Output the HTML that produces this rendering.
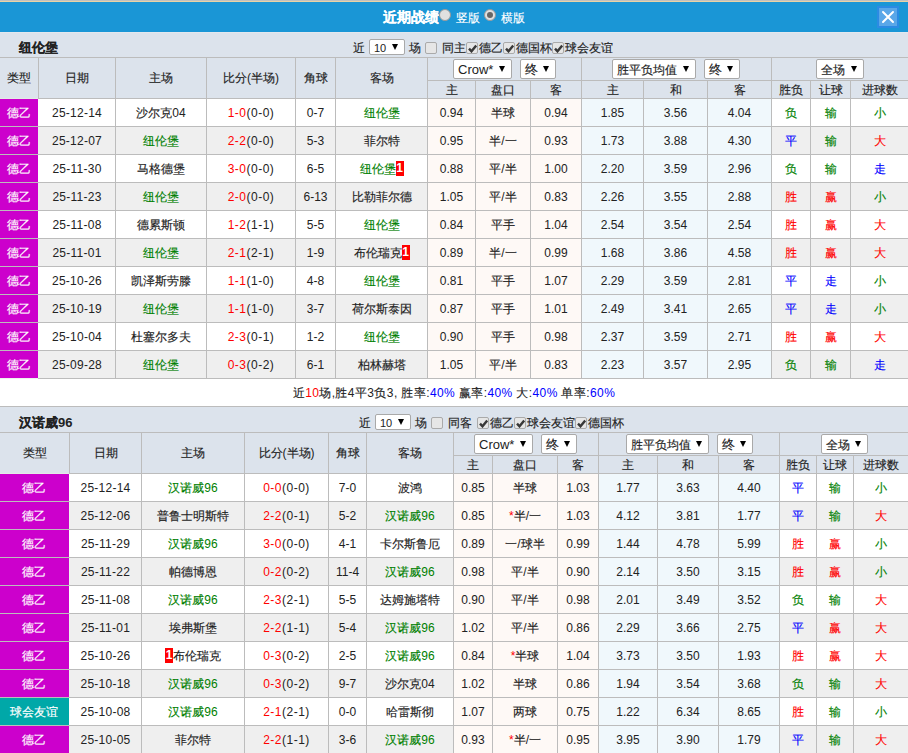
<!DOCTYPE html><html><head><meta charset="utf-8"><style>
html,body{margin:0;padding:0;}
body{width:908px;height:753px;overflow:hidden;position:relative;background:#fff;font-family:"Liberation Sans", sans-serif;font-size:12px;color:#222;}
.a{position:absolute;}
.c{-webkit-text-stroke:0.15px currentColor;}
.t{position:absolute;white-space:nowrap;}
.rc{display:inline-block;position:relative;top:-1px;background:#f00;color:#fff;font-weight:bold;width:8px;height:15px;line-height:15px;text-align:center;vertical-align:middle;font-size:12px;}
.sel{position:absolute;background:#fff;border:1px solid #a9a9a9;border-radius:2px;color:#222;white-space:nowrap;}
.tri{position:absolute;right:6px;top:50%;margin-top:-3px;width:0;height:0;border-left:3.5px solid transparent;border-right:3.5px solid transparent;border-top:6px solid #000;}
.cb{position:absolute;width:10px;height:10px;border:1px solid #aaa;border-radius:2px;background:#e6e6e6;}
.radio{position:absolute;width:10px;height:10px;border:1px solid #999;border-radius:50%;background:#e0e0e0;}
.radio .dot{position:absolute;left:2px;top:2px;width:6px;height:6px;border-radius:50%;background:#666;}
</style></head><body>
<div class="a" style="left:0px;top:0px;width:908px;height:1px;background:#c0c0c0;"></div>
<div class="a" style="left:0px;top:1px;width:908px;height:1px;background:#e9d3a6;"></div>
<div class="a" style="left:0px;top:2px;width:908px;height:30px;background:#1a96d6;"></div>
<div class="t" style="left:383px;top:9px;height:16px;line-height:16px;color:#fff;font-size:14px;font-weight:bold;"><span class="c">近期战绩</span></div>
<div class="radio" style="left:439px;top:9px"></div>
<div class="t" style="left:456px;top:9.5px;height:16px;line-height:16px;color:#fff;font-size:12px;"><span class="c">竖版</span></div>
<div class="radio" style="left:484px;top:9px"><div class="dot"></div></div>
<div class="t" style="left:501px;top:9.5px;height:16px;line-height:16px;color:#fff;font-size:12px;"><span class="c">横版</span></div>
<div class="a" style="left:877px;top:6px;width:18px;height:18px;border:2px solid #2b8be3;background:#5aa7e8"></div>
<svg class="a" style="left:877px;top:6px" width="22" height="22" viewBox="0 0 22 22"><path d="M6 6 L16 16 M16 6 L6 16" stroke="#fff" stroke-width="2" stroke-linecap="round"/></svg>
<div class="a" style="left:0px;top:32px;width:908px;height:25px;background:#dce3ec;"></div>
<div class="a" style="left:0px;top:32px;width:908px;height:1px;background:#e3e8ee;"></div>
<div class="t" style="left:19px;top:39.5px;width:281px;height:16px;line-height:16px;text-align:left;color:#222;font-size:13px;font-weight:bold;"><span class="c">纽伦堡</span></div>
<div class="a" style="left:0px;top:57px;width:908px;height:1px;background:#bcbcbc;"></div>
<div class="a" style="left:0px;top:58px;width:908px;height:40px;background:#dce3ec;"></div>
<div class="a" style="left:0px;top:98px;width:908px;height:1px;background:#bcbcbc;"></div>
<div class="a" style="left:427px;top:80px;width:481px;height:1px;background:#bcbcbc;"></div>
<div class="a" style="left:38px;top:57px;width:1px;height:41px;background:#bcbcbc;"></div>
<div class="a" style="left:115px;top:57px;width:1px;height:41px;background:#bcbcbc;"></div>
<div class="a" style="left:206px;top:57px;width:1px;height:41px;background:#bcbcbc;"></div>
<div class="a" style="left:295px;top:57px;width:1px;height:41px;background:#bcbcbc;"></div>
<div class="a" style="left:335px;top:57px;width:1px;height:41px;background:#bcbcbc;"></div>
<div class="a" style="left:427px;top:57px;width:1px;height:41px;background:#bcbcbc;"></div>
<div class="a" style="left:475px;top:80px;width:1px;height:18px;background:#bcbcbc;"></div>
<div class="a" style="left:530px;top:80px;width:1px;height:18px;background:#bcbcbc;"></div>
<div class="a" style="left:581px;top:57px;width:1px;height:41px;background:#bcbcbc;"></div>
<div class="a" style="left:643px;top:80px;width:1px;height:18px;background:#bcbcbc;"></div>
<div class="a" style="left:707px;top:80px;width:1px;height:18px;background:#bcbcbc;"></div>
<div class="a" style="left:771px;top:57px;width:1px;height:41px;background:#bcbcbc;"></div>
<div class="a" style="left:810px;top:80px;width:1px;height:18px;background:#bcbcbc;"></div>
<div class="a" style="left:850px;top:80px;width:1px;height:18px;background:#bcbcbc;"></div>
<div class="t" style="left:0px;top:70.0px;width:38px;height:16px;line-height:16px;text-align:center;color:#222;font-size:12px;"><span class="c">类型</span></div>
<div class="t" style="left:39px;top:70.0px;width:76px;height:16px;line-height:16px;text-align:center;color:#222;font-size:12px;"><span class="c">日期</span></div>
<div class="t" style="left:116px;top:70.0px;width:90px;height:16px;line-height:16px;text-align:center;color:#222;font-size:12px;"><span class="c">主场</span></div>
<div class="t" style="left:207px;top:70.0px;width:88px;height:16px;line-height:16px;text-align:center;color:#222;font-size:12px;"><span class="c">比分</span>(<span class="c">半场</span>)</div>
<div class="t" style="left:296px;top:70.0px;width:39px;height:16px;line-height:16px;text-align:center;color:#222;font-size:12px;"><span class="c">角球</span></div>
<div class="t" style="left:336px;top:70.0px;width:91px;height:16px;line-height:16px;text-align:center;color:#222;font-size:12px;"><span class="c">客场</span></div>
<div class="t" style="left:428px;top:81.5px;width:47px;height:16px;line-height:16px;text-align:center;color:#222;font-size:12px;"><span class="c">主</span></div>
<div class="t" style="left:476px;top:81.5px;width:54px;height:16px;line-height:16px;text-align:center;color:#222;font-size:12px;"><span class="c">盘口</span></div>
<div class="t" style="left:531px;top:81.5px;width:50px;height:16px;line-height:16px;text-align:center;color:#222;font-size:12px;"><span class="c">客</span></div>
<div class="t" style="left:582px;top:81.5px;width:61px;height:16px;line-height:16px;text-align:center;color:#222;font-size:12px;"><span class="c">主</span></div>
<div class="t" style="left:644px;top:81.5px;width:63px;height:16px;line-height:16px;text-align:center;color:#222;font-size:12px;"><span class="c">和</span></div>
<div class="t" style="left:708px;top:81.5px;width:63px;height:16px;line-height:16px;text-align:center;color:#222;font-size:12px;"><span class="c">客</span></div>
<div class="t" style="left:772px;top:81.5px;width:38px;height:16px;line-height:16px;text-align:center;color:#222;font-size:12px;"><span class="c">胜负</span></div>
<div class="t" style="left:811px;top:81.5px;width:39px;height:16px;line-height:16px;text-align:center;color:#222;font-size:12px;"><span class="c">让球</span></div>
<div class="t" style="left:851px;top:81.5px;width:57px;height:16px;line-height:16px;text-align:center;color:#222;font-size:12px;"><span class="c">进球数</span></div>
<div class="t" style="left:353px;top:40px;height:16px;line-height:16px;color:#222;font-size:12px;"><span class="c">近</span></div>
<div class="sel" style="left:369px;top:39px;width:34px;height:14px;line-height:14px;font-size:12px"><span style="position:absolute;left:4px;top:1px;font-size:11px">10</span><span class="tri"></span></div>
<div class="t" style="left:409px;top:40px;height:16px;line-height:16px;color:#222;font-size:12px;"><span class="c">场</span></div>
<div class="cb" style="left:425px;top:42px"></div>
<div class="t" style="left:442px;top:40px;height:16px;line-height:16px;color:#222;font-size:12px;"><span class="c">同主</span></div>
<div class="cb" style="left:466px;top:42px"><svg width="9" height="9" viewBox="0 0 9 9" style="position:absolute;left:1px;top:1px"><path d="M1 4.6 L3.5 7.3 L8.2 1.6" fill="none" stroke="#383838" stroke-width="2.4"/></svg></div>
<div class="t" style="left:479px;top:40px;height:16px;line-height:16px;color:#222;font-size:12px;"><span class="c">德乙</span></div>
<div class="cb" style="left:503px;top:42px"><svg width="9" height="9" viewBox="0 0 9 9" style="position:absolute;left:1px;top:1px"><path d="M1 4.6 L3.5 7.3 L8.2 1.6" fill="none" stroke="#383838" stroke-width="2.4"/></svg></div>
<div class="t" style="left:516px;top:40px;height:16px;line-height:16px;color:#222;font-size:12px;"><span class="c">德国杯</span></div>
<div class="cb" style="left:552px;top:42px"><svg width="9" height="9" viewBox="0 0 9 9" style="position:absolute;left:1px;top:1px"><path d="M1 4.6 L3.5 7.3 L8.2 1.6" fill="none" stroke="#383838" stroke-width="2.4"/></svg></div>
<div class="t" style="left:565px;top:40px;height:16px;line-height:16px;color:#222;font-size:12px;"><span class="c">球会友谊</span></div>
<div class="sel" style="left:453px;top:59px;width:57px;height:18px;line-height:18px;font-size:13px"><span style="position:absolute;left:4px;top:1px">Crow*</span><span class="tri"></span></div>
<div class="sel" style="left:520px;top:59px;width:34px;height:18px;line-height:18px;font-size:13px"><span style="position:absolute;left:4px;top:1px;font-size:13px"><span class="c">终</span></span><span class="tri"></span></div>
<div class="sel" style="left:612px;top:59px;width:82px;height:18px;line-height:18px;font-size:13px"><span style="position:absolute;left:4px;top:1px;font-size:12px"><span class="c">胜平负均值</span></span><span class="tri"></span></div>
<div class="sel" style="left:704px;top:59px;width:34px;height:18px;line-height:18px;font-size:13px"><span style="position:absolute;left:4px;top:1px;font-size:13px"><span class="c">终</span></span><span class="tri"></span></div>
<div class="sel" style="left:816px;top:59px;width:46px;height:18px;line-height:18px;font-size:13px"><span style="position:absolute;left:4px;top:1px;font-size:12px"><span class="c">全场</span></span><span class="tri"></span></div>
<div class="a" style="left:0px;top:99px;width:908px;height:27px;background:#ffffff;"></div>
<div class="a" style="left:428px;top:99px;width:153px;height:27px;background:#fef9f6;"></div>
<div class="a" style="left:582px;top:99px;width:189px;height:27px;background:#f0f8fc;"></div>
<div class="a" style="left:0px;top:99px;width:38px;height:27px;background:#cc00cc;"></div>
<div class="a" style="left:0px;top:98px;width:38px;height:1px;background:#e4ebe6;"></div>
<div class="a" style="left:38px;top:126px;width:870px;height:1px;background:#bcbcbc;"></div>
<div class="a" style="left:0px;top:126px;width:38px;height:1px;background:#bcbcbc;"></div>
<div class="a" style="left:115px;top:99px;width:1px;height:27px;background:#bcbcbc;"></div>
<div class="a" style="left:206px;top:99px;width:1px;height:27px;background:#bcbcbc;"></div>
<div class="a" style="left:295px;top:99px;width:1px;height:27px;background:#bcbcbc;"></div>
<div class="a" style="left:335px;top:99px;width:1px;height:27px;background:#bcbcbc;"></div>
<div class="a" style="left:427px;top:99px;width:1px;height:27px;background:#bcbcbc;"></div>
<div class="a" style="left:475px;top:99px;width:1px;height:27px;background:#bcbcbc;"></div>
<div class="a" style="left:530px;top:99px;width:1px;height:27px;background:#bcbcbc;"></div>
<div class="a" style="left:581px;top:99px;width:1px;height:27px;background:#bcbcbc;"></div>
<div class="a" style="left:643px;top:99px;width:1px;height:27px;background:#bcbcbc;"></div>
<div class="a" style="left:707px;top:99px;width:1px;height:27px;background:#bcbcbc;"></div>
<div class="a" style="left:771px;top:99px;width:1px;height:27px;background:#bcbcbc;"></div>
<div class="a" style="left:810px;top:99px;width:1px;height:27px;background:#bcbcbc;"></div>
<div class="a" style="left:850px;top:99px;width:1px;height:27px;background:#bcbcbc;"></div>
<div class="t" style="left:0px;top:104.5px;width:38px;height:16px;line-height:16px;text-align:center;color:#fff;font-size:12px;"><span class="c">德乙</span></div>
<div class="t" style="left:39px;top:104.5px;width:76px;height:16px;line-height:16px;text-align:center;color:#222;font-size:12px;letter-spacing:0.25px;">25-12-14</div>
<div class="t" style="left:116px;top:104.5px;width:90px;height:16px;line-height:16px;text-align:center;color:#222;font-size:12px;"><span class="c">沙尔克</span>04</div>
<div class="t" style="left:207px;top:104.5px;width:88px;height:16px;line-height:16px;text-align:center;color:#222;font-size:12px;letter-spacing:0.5px;"><span style="color:#ff0000">1-0</span>(0-0)</div>
<div class="t" style="left:296px;top:104.5px;width:39px;height:16px;line-height:16px;text-align:center;color:#222;font-size:12px;">0-7</div>
<div class="t" style="left:336px;top:104.5px;width:91px;height:16px;line-height:16px;text-align:center;color:#008000;font-size:12px;"><span class="c">纽伦堡</span></div>
<div class="t" style="left:428px;top:104.5px;width:47px;height:16px;line-height:16px;text-align:center;color:#222;font-size:12px;">0.94</div>
<div class="t" style="left:476px;top:104.5px;width:54px;height:16px;line-height:16px;text-align:center;color:#222;font-size:12px;"><span class="c">半球</span></div>
<div class="t" style="left:531px;top:104.5px;width:50px;height:16px;line-height:16px;text-align:center;color:#222;font-size:12px;">0.94</div>
<div class="t" style="left:582px;top:104.5px;width:61px;height:16px;line-height:16px;text-align:center;color:#222;font-size:12px;">1.85</div>
<div class="t" style="left:644px;top:104.5px;width:63px;height:16px;line-height:16px;text-align:center;color:#222;font-size:12px;">3.56</div>
<div class="t" style="left:708px;top:104.5px;width:63px;height:16px;line-height:16px;text-align:center;color:#222;font-size:12px;">4.04</div>
<div class="t" style="left:772px;top:104.5px;width:38px;height:16px;line-height:16px;text-align:center;color:#008000;font-size:12px;"><span class="c">负</span></div>
<div class="t" style="left:811px;top:104.5px;width:39px;height:16px;line-height:16px;text-align:center;color:#008000;font-size:12px;"><span class="c">输</span></div>
<div class="t" style="left:851px;top:104.5px;width:57px;height:16px;line-height:16px;text-align:center;color:#008000;font-size:12px;"><span class="c">小</span></div>
<div class="a" style="left:0px;top:127px;width:908px;height:27px;background:#efefef;"></div>
<div class="a" style="left:428px;top:127px;width:153px;height:27px;background:#fef9f6;"></div>
<div class="a" style="left:582px;top:127px;width:189px;height:27px;background:#f0f8fc;"></div>
<div class="a" style="left:0px;top:127px;width:38px;height:27px;background:#cc00cc;"></div>
<div class="a" style="left:38px;top:154px;width:870px;height:1px;background:#bcbcbc;"></div>
<div class="a" style="left:0px;top:154px;width:38px;height:1px;background:#bcbcbc;"></div>
<div class="a" style="left:115px;top:127px;width:1px;height:27px;background:#bcbcbc;"></div>
<div class="a" style="left:206px;top:127px;width:1px;height:27px;background:#bcbcbc;"></div>
<div class="a" style="left:295px;top:127px;width:1px;height:27px;background:#bcbcbc;"></div>
<div class="a" style="left:335px;top:127px;width:1px;height:27px;background:#bcbcbc;"></div>
<div class="a" style="left:427px;top:127px;width:1px;height:27px;background:#bcbcbc;"></div>
<div class="a" style="left:475px;top:127px;width:1px;height:27px;background:#bcbcbc;"></div>
<div class="a" style="left:530px;top:127px;width:1px;height:27px;background:#bcbcbc;"></div>
<div class="a" style="left:581px;top:127px;width:1px;height:27px;background:#bcbcbc;"></div>
<div class="a" style="left:643px;top:127px;width:1px;height:27px;background:#bcbcbc;"></div>
<div class="a" style="left:707px;top:127px;width:1px;height:27px;background:#bcbcbc;"></div>
<div class="a" style="left:771px;top:127px;width:1px;height:27px;background:#bcbcbc;"></div>
<div class="a" style="left:810px;top:127px;width:1px;height:27px;background:#bcbcbc;"></div>
<div class="a" style="left:850px;top:127px;width:1px;height:27px;background:#bcbcbc;"></div>
<div class="t" style="left:0px;top:132.5px;width:38px;height:16px;line-height:16px;text-align:center;color:#fff;font-size:12px;"><span class="c">德乙</span></div>
<div class="t" style="left:39px;top:132.5px;width:76px;height:16px;line-height:16px;text-align:center;color:#222;font-size:12px;letter-spacing:0.25px;">25-12-07</div>
<div class="t" style="left:116px;top:132.5px;width:90px;height:16px;line-height:16px;text-align:center;color:#008000;font-size:12px;"><span class="c">纽伦堡</span></div>
<div class="t" style="left:207px;top:132.5px;width:88px;height:16px;line-height:16px;text-align:center;color:#222;font-size:12px;letter-spacing:0.5px;"><span style="color:#ff0000">2-2</span>(0-0)</div>
<div class="t" style="left:296px;top:132.5px;width:39px;height:16px;line-height:16px;text-align:center;color:#222;font-size:12px;">5-3</div>
<div class="t" style="left:336px;top:132.5px;width:91px;height:16px;line-height:16px;text-align:center;color:#222;font-size:12px;"><span class="c">菲尔特</span></div>
<div class="t" style="left:428px;top:132.5px;width:47px;height:16px;line-height:16px;text-align:center;color:#222;font-size:12px;">0.95</div>
<div class="t" style="left:476px;top:132.5px;width:54px;height:16px;line-height:16px;text-align:center;color:#222;font-size:12px;"><span class="c">半</span>/<span class="c">一</span></div>
<div class="t" style="left:531px;top:132.5px;width:50px;height:16px;line-height:16px;text-align:center;color:#222;font-size:12px;">0.93</div>
<div class="t" style="left:582px;top:132.5px;width:61px;height:16px;line-height:16px;text-align:center;color:#222;font-size:12px;">1.73</div>
<div class="t" style="left:644px;top:132.5px;width:63px;height:16px;line-height:16px;text-align:center;color:#222;font-size:12px;">3.88</div>
<div class="t" style="left:708px;top:132.5px;width:63px;height:16px;line-height:16px;text-align:center;color:#222;font-size:12px;">4.30</div>
<div class="t" style="left:772px;top:132.5px;width:38px;height:16px;line-height:16px;text-align:center;color:#0000ff;font-size:12px;"><span class="c">平</span></div>
<div class="t" style="left:811px;top:132.5px;width:39px;height:16px;line-height:16px;text-align:center;color:#008000;font-size:12px;"><span class="c">输</span></div>
<div class="t" style="left:851px;top:132.5px;width:57px;height:16px;line-height:16px;text-align:center;color:#ff0000;font-size:12px;"><span class="c">大</span></div>
<div class="a" style="left:0px;top:155px;width:908px;height:27px;background:#ffffff;"></div>
<div class="a" style="left:428px;top:155px;width:153px;height:27px;background:#fef9f6;"></div>
<div class="a" style="left:582px;top:155px;width:189px;height:27px;background:#f0f8fc;"></div>
<div class="a" style="left:0px;top:155px;width:38px;height:27px;background:#cc00cc;"></div>
<div class="a" style="left:38px;top:182px;width:870px;height:1px;background:#bcbcbc;"></div>
<div class="a" style="left:0px;top:182px;width:38px;height:1px;background:#bcbcbc;"></div>
<div class="a" style="left:115px;top:155px;width:1px;height:27px;background:#bcbcbc;"></div>
<div class="a" style="left:206px;top:155px;width:1px;height:27px;background:#bcbcbc;"></div>
<div class="a" style="left:295px;top:155px;width:1px;height:27px;background:#bcbcbc;"></div>
<div class="a" style="left:335px;top:155px;width:1px;height:27px;background:#bcbcbc;"></div>
<div class="a" style="left:427px;top:155px;width:1px;height:27px;background:#bcbcbc;"></div>
<div class="a" style="left:475px;top:155px;width:1px;height:27px;background:#bcbcbc;"></div>
<div class="a" style="left:530px;top:155px;width:1px;height:27px;background:#bcbcbc;"></div>
<div class="a" style="left:581px;top:155px;width:1px;height:27px;background:#bcbcbc;"></div>
<div class="a" style="left:643px;top:155px;width:1px;height:27px;background:#bcbcbc;"></div>
<div class="a" style="left:707px;top:155px;width:1px;height:27px;background:#bcbcbc;"></div>
<div class="a" style="left:771px;top:155px;width:1px;height:27px;background:#bcbcbc;"></div>
<div class="a" style="left:810px;top:155px;width:1px;height:27px;background:#bcbcbc;"></div>
<div class="a" style="left:850px;top:155px;width:1px;height:27px;background:#bcbcbc;"></div>
<div class="t" style="left:0px;top:160.5px;width:38px;height:16px;line-height:16px;text-align:center;color:#fff;font-size:12px;"><span class="c">德乙</span></div>
<div class="t" style="left:39px;top:160.5px;width:76px;height:16px;line-height:16px;text-align:center;color:#222;font-size:12px;letter-spacing:0.25px;">25-11-30</div>
<div class="t" style="left:116px;top:160.5px;width:90px;height:16px;line-height:16px;text-align:center;color:#222;font-size:12px;"><span class="c">马格德堡</span></div>
<div class="t" style="left:207px;top:160.5px;width:88px;height:16px;line-height:16px;text-align:center;color:#222;font-size:12px;letter-spacing:0.5px;"><span style="color:#ff0000">3-0</span>(0-0)</div>
<div class="t" style="left:296px;top:160.5px;width:39px;height:16px;line-height:16px;text-align:center;color:#222;font-size:12px;">6-5</div>
<div class="t" style="left:336px;top:160.5px;width:91px;height:16px;line-height:16px;text-align:center;color:#008000;font-size:12px;"><span class="c">纽伦堡</span><span class="rc">1</span></div>
<div class="t" style="left:428px;top:160.5px;width:47px;height:16px;line-height:16px;text-align:center;color:#222;font-size:12px;">0.88</div>
<div class="t" style="left:476px;top:160.5px;width:54px;height:16px;line-height:16px;text-align:center;color:#222;font-size:12px;"><span class="c">平</span>/<span class="c">半</span></div>
<div class="t" style="left:531px;top:160.5px;width:50px;height:16px;line-height:16px;text-align:center;color:#222;font-size:12px;">1.00</div>
<div class="t" style="left:582px;top:160.5px;width:61px;height:16px;line-height:16px;text-align:center;color:#222;font-size:12px;">2.20</div>
<div class="t" style="left:644px;top:160.5px;width:63px;height:16px;line-height:16px;text-align:center;color:#222;font-size:12px;">3.59</div>
<div class="t" style="left:708px;top:160.5px;width:63px;height:16px;line-height:16px;text-align:center;color:#222;font-size:12px;">2.96</div>
<div class="t" style="left:772px;top:160.5px;width:38px;height:16px;line-height:16px;text-align:center;color:#008000;font-size:12px;"><span class="c">负</span></div>
<div class="t" style="left:811px;top:160.5px;width:39px;height:16px;line-height:16px;text-align:center;color:#008000;font-size:12px;"><span class="c">输</span></div>
<div class="t" style="left:851px;top:160.5px;width:57px;height:16px;line-height:16px;text-align:center;color:#0000ff;font-size:12px;"><span class="c">走</span></div>
<div class="a" style="left:0px;top:183px;width:908px;height:27px;background:#efefef;"></div>
<div class="a" style="left:428px;top:183px;width:153px;height:27px;background:#fef9f6;"></div>
<div class="a" style="left:582px;top:183px;width:189px;height:27px;background:#f0f8fc;"></div>
<div class="a" style="left:0px;top:183px;width:38px;height:27px;background:#cc00cc;"></div>
<div class="a" style="left:38px;top:210px;width:870px;height:1px;background:#bcbcbc;"></div>
<div class="a" style="left:0px;top:210px;width:38px;height:1px;background:#bcbcbc;"></div>
<div class="a" style="left:115px;top:183px;width:1px;height:27px;background:#bcbcbc;"></div>
<div class="a" style="left:206px;top:183px;width:1px;height:27px;background:#bcbcbc;"></div>
<div class="a" style="left:295px;top:183px;width:1px;height:27px;background:#bcbcbc;"></div>
<div class="a" style="left:335px;top:183px;width:1px;height:27px;background:#bcbcbc;"></div>
<div class="a" style="left:427px;top:183px;width:1px;height:27px;background:#bcbcbc;"></div>
<div class="a" style="left:475px;top:183px;width:1px;height:27px;background:#bcbcbc;"></div>
<div class="a" style="left:530px;top:183px;width:1px;height:27px;background:#bcbcbc;"></div>
<div class="a" style="left:581px;top:183px;width:1px;height:27px;background:#bcbcbc;"></div>
<div class="a" style="left:643px;top:183px;width:1px;height:27px;background:#bcbcbc;"></div>
<div class="a" style="left:707px;top:183px;width:1px;height:27px;background:#bcbcbc;"></div>
<div class="a" style="left:771px;top:183px;width:1px;height:27px;background:#bcbcbc;"></div>
<div class="a" style="left:810px;top:183px;width:1px;height:27px;background:#bcbcbc;"></div>
<div class="a" style="left:850px;top:183px;width:1px;height:27px;background:#bcbcbc;"></div>
<div class="t" style="left:0px;top:188.5px;width:38px;height:16px;line-height:16px;text-align:center;color:#fff;font-size:12px;"><span class="c">德乙</span></div>
<div class="t" style="left:39px;top:188.5px;width:76px;height:16px;line-height:16px;text-align:center;color:#222;font-size:12px;letter-spacing:0.25px;">25-11-23</div>
<div class="t" style="left:116px;top:188.5px;width:90px;height:16px;line-height:16px;text-align:center;color:#008000;font-size:12px;"><span class="c">纽伦堡</span></div>
<div class="t" style="left:207px;top:188.5px;width:88px;height:16px;line-height:16px;text-align:center;color:#222;font-size:12px;letter-spacing:0.5px;"><span style="color:#ff0000">2-0</span>(0-0)</div>
<div class="t" style="left:296px;top:188.5px;width:39px;height:16px;line-height:16px;text-align:center;color:#222;font-size:12px;">6-13</div>
<div class="t" style="left:336px;top:188.5px;width:91px;height:16px;line-height:16px;text-align:center;color:#222;font-size:12px;"><span class="c">比勒菲尔德</span></div>
<div class="t" style="left:428px;top:188.5px;width:47px;height:16px;line-height:16px;text-align:center;color:#222;font-size:12px;">1.05</div>
<div class="t" style="left:476px;top:188.5px;width:54px;height:16px;line-height:16px;text-align:center;color:#222;font-size:12px;"><span class="c">平</span>/<span class="c">半</span></div>
<div class="t" style="left:531px;top:188.5px;width:50px;height:16px;line-height:16px;text-align:center;color:#222;font-size:12px;">0.83</div>
<div class="t" style="left:582px;top:188.5px;width:61px;height:16px;line-height:16px;text-align:center;color:#222;font-size:12px;">2.26</div>
<div class="t" style="left:644px;top:188.5px;width:63px;height:16px;line-height:16px;text-align:center;color:#222;font-size:12px;">3.55</div>
<div class="t" style="left:708px;top:188.5px;width:63px;height:16px;line-height:16px;text-align:center;color:#222;font-size:12px;">2.88</div>
<div class="t" style="left:772px;top:188.5px;width:38px;height:16px;line-height:16px;text-align:center;color:#ff0000;font-size:12px;"><span class="c">胜</span></div>
<div class="t" style="left:811px;top:188.5px;width:39px;height:16px;line-height:16px;text-align:center;color:#ff0000;font-size:12px;"><span class="c">赢</span></div>
<div class="t" style="left:851px;top:188.5px;width:57px;height:16px;line-height:16px;text-align:center;color:#008000;font-size:12px;"><span class="c">小</span></div>
<div class="a" style="left:0px;top:211px;width:908px;height:27px;background:#ffffff;"></div>
<div class="a" style="left:428px;top:211px;width:153px;height:27px;background:#fef9f6;"></div>
<div class="a" style="left:582px;top:211px;width:189px;height:27px;background:#f0f8fc;"></div>
<div class="a" style="left:0px;top:211px;width:38px;height:27px;background:#cc00cc;"></div>
<div class="a" style="left:38px;top:238px;width:870px;height:1px;background:#bcbcbc;"></div>
<div class="a" style="left:0px;top:238px;width:38px;height:1px;background:#bcbcbc;"></div>
<div class="a" style="left:115px;top:211px;width:1px;height:27px;background:#bcbcbc;"></div>
<div class="a" style="left:206px;top:211px;width:1px;height:27px;background:#bcbcbc;"></div>
<div class="a" style="left:295px;top:211px;width:1px;height:27px;background:#bcbcbc;"></div>
<div class="a" style="left:335px;top:211px;width:1px;height:27px;background:#bcbcbc;"></div>
<div class="a" style="left:427px;top:211px;width:1px;height:27px;background:#bcbcbc;"></div>
<div class="a" style="left:475px;top:211px;width:1px;height:27px;background:#bcbcbc;"></div>
<div class="a" style="left:530px;top:211px;width:1px;height:27px;background:#bcbcbc;"></div>
<div class="a" style="left:581px;top:211px;width:1px;height:27px;background:#bcbcbc;"></div>
<div class="a" style="left:643px;top:211px;width:1px;height:27px;background:#bcbcbc;"></div>
<div class="a" style="left:707px;top:211px;width:1px;height:27px;background:#bcbcbc;"></div>
<div class="a" style="left:771px;top:211px;width:1px;height:27px;background:#bcbcbc;"></div>
<div class="a" style="left:810px;top:211px;width:1px;height:27px;background:#bcbcbc;"></div>
<div class="a" style="left:850px;top:211px;width:1px;height:27px;background:#bcbcbc;"></div>
<div class="t" style="left:0px;top:216.5px;width:38px;height:16px;line-height:16px;text-align:center;color:#fff;font-size:12px;"><span class="c">德乙</span></div>
<div class="t" style="left:39px;top:216.5px;width:76px;height:16px;line-height:16px;text-align:center;color:#222;font-size:12px;letter-spacing:0.25px;">25-11-08</div>
<div class="t" style="left:116px;top:216.5px;width:90px;height:16px;line-height:16px;text-align:center;color:#222;font-size:12px;"><span class="c">德累斯顿</span></div>
<div class="t" style="left:207px;top:216.5px;width:88px;height:16px;line-height:16px;text-align:center;color:#222;font-size:12px;letter-spacing:0.5px;"><span style="color:#ff0000">1-2</span>(1-1)</div>
<div class="t" style="left:296px;top:216.5px;width:39px;height:16px;line-height:16px;text-align:center;color:#222;font-size:12px;">5-5</div>
<div class="t" style="left:336px;top:216.5px;width:91px;height:16px;line-height:16px;text-align:center;color:#008000;font-size:12px;"><span class="c">纽伦堡</span></div>
<div class="t" style="left:428px;top:216.5px;width:47px;height:16px;line-height:16px;text-align:center;color:#222;font-size:12px;">0.84</div>
<div class="t" style="left:476px;top:216.5px;width:54px;height:16px;line-height:16px;text-align:center;color:#222;font-size:12px;"><span class="c">平手</span></div>
<div class="t" style="left:531px;top:216.5px;width:50px;height:16px;line-height:16px;text-align:center;color:#222;font-size:12px;">1.04</div>
<div class="t" style="left:582px;top:216.5px;width:61px;height:16px;line-height:16px;text-align:center;color:#222;font-size:12px;">2.54</div>
<div class="t" style="left:644px;top:216.5px;width:63px;height:16px;line-height:16px;text-align:center;color:#222;font-size:12px;">3.54</div>
<div class="t" style="left:708px;top:216.5px;width:63px;height:16px;line-height:16px;text-align:center;color:#222;font-size:12px;">2.54</div>
<div class="t" style="left:772px;top:216.5px;width:38px;height:16px;line-height:16px;text-align:center;color:#ff0000;font-size:12px;"><span class="c">胜</span></div>
<div class="t" style="left:811px;top:216.5px;width:39px;height:16px;line-height:16px;text-align:center;color:#ff0000;font-size:12px;"><span class="c">赢</span></div>
<div class="t" style="left:851px;top:216.5px;width:57px;height:16px;line-height:16px;text-align:center;color:#ff0000;font-size:12px;"><span class="c">大</span></div>
<div class="a" style="left:0px;top:239px;width:908px;height:27px;background:#efefef;"></div>
<div class="a" style="left:428px;top:239px;width:153px;height:27px;background:#fef9f6;"></div>
<div class="a" style="left:582px;top:239px;width:189px;height:27px;background:#f0f8fc;"></div>
<div class="a" style="left:0px;top:239px;width:38px;height:27px;background:#cc00cc;"></div>
<div class="a" style="left:38px;top:266px;width:870px;height:1px;background:#bcbcbc;"></div>
<div class="a" style="left:0px;top:266px;width:38px;height:1px;background:#bcbcbc;"></div>
<div class="a" style="left:115px;top:239px;width:1px;height:27px;background:#bcbcbc;"></div>
<div class="a" style="left:206px;top:239px;width:1px;height:27px;background:#bcbcbc;"></div>
<div class="a" style="left:295px;top:239px;width:1px;height:27px;background:#bcbcbc;"></div>
<div class="a" style="left:335px;top:239px;width:1px;height:27px;background:#bcbcbc;"></div>
<div class="a" style="left:427px;top:239px;width:1px;height:27px;background:#bcbcbc;"></div>
<div class="a" style="left:475px;top:239px;width:1px;height:27px;background:#bcbcbc;"></div>
<div class="a" style="left:530px;top:239px;width:1px;height:27px;background:#bcbcbc;"></div>
<div class="a" style="left:581px;top:239px;width:1px;height:27px;background:#bcbcbc;"></div>
<div class="a" style="left:643px;top:239px;width:1px;height:27px;background:#bcbcbc;"></div>
<div class="a" style="left:707px;top:239px;width:1px;height:27px;background:#bcbcbc;"></div>
<div class="a" style="left:771px;top:239px;width:1px;height:27px;background:#bcbcbc;"></div>
<div class="a" style="left:810px;top:239px;width:1px;height:27px;background:#bcbcbc;"></div>
<div class="a" style="left:850px;top:239px;width:1px;height:27px;background:#bcbcbc;"></div>
<div class="t" style="left:0px;top:244.5px;width:38px;height:16px;line-height:16px;text-align:center;color:#fff;font-size:12px;"><span class="c">德乙</span></div>
<div class="t" style="left:39px;top:244.5px;width:76px;height:16px;line-height:16px;text-align:center;color:#222;font-size:12px;letter-spacing:0.25px;">25-11-01</div>
<div class="t" style="left:116px;top:244.5px;width:90px;height:16px;line-height:16px;text-align:center;color:#008000;font-size:12px;"><span class="c">纽伦堡</span></div>
<div class="t" style="left:207px;top:244.5px;width:88px;height:16px;line-height:16px;text-align:center;color:#222;font-size:12px;letter-spacing:0.5px;"><span style="color:#ff0000">2-1</span>(2-1)</div>
<div class="t" style="left:296px;top:244.5px;width:39px;height:16px;line-height:16px;text-align:center;color:#222;font-size:12px;">1-9</div>
<div class="t" style="left:336px;top:244.5px;width:91px;height:16px;line-height:16px;text-align:center;color:#222;font-size:12px;"><span class="c">布伦瑞克</span><span class="rc">1</span></div>
<div class="t" style="left:428px;top:244.5px;width:47px;height:16px;line-height:16px;text-align:center;color:#222;font-size:12px;">0.89</div>
<div class="t" style="left:476px;top:244.5px;width:54px;height:16px;line-height:16px;text-align:center;color:#222;font-size:12px;"><span class="c">半</span>/<span class="c">一</span></div>
<div class="t" style="left:531px;top:244.5px;width:50px;height:16px;line-height:16px;text-align:center;color:#222;font-size:12px;">0.99</div>
<div class="t" style="left:582px;top:244.5px;width:61px;height:16px;line-height:16px;text-align:center;color:#222;font-size:12px;">1.68</div>
<div class="t" style="left:644px;top:244.5px;width:63px;height:16px;line-height:16px;text-align:center;color:#222;font-size:12px;">3.86</div>
<div class="t" style="left:708px;top:244.5px;width:63px;height:16px;line-height:16px;text-align:center;color:#222;font-size:12px;">4.58</div>
<div class="t" style="left:772px;top:244.5px;width:38px;height:16px;line-height:16px;text-align:center;color:#ff0000;font-size:12px;"><span class="c">胜</span></div>
<div class="t" style="left:811px;top:244.5px;width:39px;height:16px;line-height:16px;text-align:center;color:#ff0000;font-size:12px;"><span class="c">赢</span></div>
<div class="t" style="left:851px;top:244.5px;width:57px;height:16px;line-height:16px;text-align:center;color:#ff0000;font-size:12px;"><span class="c">大</span></div>
<div class="a" style="left:0px;top:267px;width:908px;height:27px;background:#ffffff;"></div>
<div class="a" style="left:428px;top:267px;width:153px;height:27px;background:#fef9f6;"></div>
<div class="a" style="left:582px;top:267px;width:189px;height:27px;background:#f0f8fc;"></div>
<div class="a" style="left:0px;top:267px;width:38px;height:27px;background:#cc00cc;"></div>
<div class="a" style="left:38px;top:294px;width:870px;height:1px;background:#bcbcbc;"></div>
<div class="a" style="left:0px;top:294px;width:38px;height:1px;background:#bcbcbc;"></div>
<div class="a" style="left:115px;top:267px;width:1px;height:27px;background:#bcbcbc;"></div>
<div class="a" style="left:206px;top:267px;width:1px;height:27px;background:#bcbcbc;"></div>
<div class="a" style="left:295px;top:267px;width:1px;height:27px;background:#bcbcbc;"></div>
<div class="a" style="left:335px;top:267px;width:1px;height:27px;background:#bcbcbc;"></div>
<div class="a" style="left:427px;top:267px;width:1px;height:27px;background:#bcbcbc;"></div>
<div class="a" style="left:475px;top:267px;width:1px;height:27px;background:#bcbcbc;"></div>
<div class="a" style="left:530px;top:267px;width:1px;height:27px;background:#bcbcbc;"></div>
<div class="a" style="left:581px;top:267px;width:1px;height:27px;background:#bcbcbc;"></div>
<div class="a" style="left:643px;top:267px;width:1px;height:27px;background:#bcbcbc;"></div>
<div class="a" style="left:707px;top:267px;width:1px;height:27px;background:#bcbcbc;"></div>
<div class="a" style="left:771px;top:267px;width:1px;height:27px;background:#bcbcbc;"></div>
<div class="a" style="left:810px;top:267px;width:1px;height:27px;background:#bcbcbc;"></div>
<div class="a" style="left:850px;top:267px;width:1px;height:27px;background:#bcbcbc;"></div>
<div class="t" style="left:0px;top:272.5px;width:38px;height:16px;line-height:16px;text-align:center;color:#fff;font-size:12px;"><span class="c">德乙</span></div>
<div class="t" style="left:39px;top:272.5px;width:76px;height:16px;line-height:16px;text-align:center;color:#222;font-size:12px;letter-spacing:0.25px;">25-10-26</div>
<div class="t" style="left:116px;top:272.5px;width:90px;height:16px;line-height:16px;text-align:center;color:#222;font-size:12px;"><span class="c">凯泽斯劳滕</span></div>
<div class="t" style="left:207px;top:272.5px;width:88px;height:16px;line-height:16px;text-align:center;color:#222;font-size:12px;letter-spacing:0.5px;"><span style="color:#ff0000">1-1</span>(1-0)</div>
<div class="t" style="left:296px;top:272.5px;width:39px;height:16px;line-height:16px;text-align:center;color:#222;font-size:12px;">4-8</div>
<div class="t" style="left:336px;top:272.5px;width:91px;height:16px;line-height:16px;text-align:center;color:#008000;font-size:12px;"><span class="c">纽伦堡</span></div>
<div class="t" style="left:428px;top:272.5px;width:47px;height:16px;line-height:16px;text-align:center;color:#222;font-size:12px;">0.81</div>
<div class="t" style="left:476px;top:272.5px;width:54px;height:16px;line-height:16px;text-align:center;color:#222;font-size:12px;"><span class="c">平手</span></div>
<div class="t" style="left:531px;top:272.5px;width:50px;height:16px;line-height:16px;text-align:center;color:#222;font-size:12px;">1.07</div>
<div class="t" style="left:582px;top:272.5px;width:61px;height:16px;line-height:16px;text-align:center;color:#222;font-size:12px;">2.29</div>
<div class="t" style="left:644px;top:272.5px;width:63px;height:16px;line-height:16px;text-align:center;color:#222;font-size:12px;">3.59</div>
<div class="t" style="left:708px;top:272.5px;width:63px;height:16px;line-height:16px;text-align:center;color:#222;font-size:12px;">2.81</div>
<div class="t" style="left:772px;top:272.5px;width:38px;height:16px;line-height:16px;text-align:center;color:#0000ff;font-size:12px;"><span class="c">平</span></div>
<div class="t" style="left:811px;top:272.5px;width:39px;height:16px;line-height:16px;text-align:center;color:#0000ff;font-size:12px;"><span class="c">走</span></div>
<div class="t" style="left:851px;top:272.5px;width:57px;height:16px;line-height:16px;text-align:center;color:#008000;font-size:12px;"><span class="c">小</span></div>
<div class="a" style="left:0px;top:295px;width:908px;height:27px;background:#efefef;"></div>
<div class="a" style="left:428px;top:295px;width:153px;height:27px;background:#fef9f6;"></div>
<div class="a" style="left:582px;top:295px;width:189px;height:27px;background:#f0f8fc;"></div>
<div class="a" style="left:0px;top:295px;width:38px;height:27px;background:#cc00cc;"></div>
<div class="a" style="left:38px;top:322px;width:870px;height:1px;background:#bcbcbc;"></div>
<div class="a" style="left:0px;top:322px;width:38px;height:1px;background:#bcbcbc;"></div>
<div class="a" style="left:115px;top:295px;width:1px;height:27px;background:#bcbcbc;"></div>
<div class="a" style="left:206px;top:295px;width:1px;height:27px;background:#bcbcbc;"></div>
<div class="a" style="left:295px;top:295px;width:1px;height:27px;background:#bcbcbc;"></div>
<div class="a" style="left:335px;top:295px;width:1px;height:27px;background:#bcbcbc;"></div>
<div class="a" style="left:427px;top:295px;width:1px;height:27px;background:#bcbcbc;"></div>
<div class="a" style="left:475px;top:295px;width:1px;height:27px;background:#bcbcbc;"></div>
<div class="a" style="left:530px;top:295px;width:1px;height:27px;background:#bcbcbc;"></div>
<div class="a" style="left:581px;top:295px;width:1px;height:27px;background:#bcbcbc;"></div>
<div class="a" style="left:643px;top:295px;width:1px;height:27px;background:#bcbcbc;"></div>
<div class="a" style="left:707px;top:295px;width:1px;height:27px;background:#bcbcbc;"></div>
<div class="a" style="left:771px;top:295px;width:1px;height:27px;background:#bcbcbc;"></div>
<div class="a" style="left:810px;top:295px;width:1px;height:27px;background:#bcbcbc;"></div>
<div class="a" style="left:850px;top:295px;width:1px;height:27px;background:#bcbcbc;"></div>
<div class="t" style="left:0px;top:300.5px;width:38px;height:16px;line-height:16px;text-align:center;color:#fff;font-size:12px;"><span class="c">德乙</span></div>
<div class="t" style="left:39px;top:300.5px;width:76px;height:16px;line-height:16px;text-align:center;color:#222;font-size:12px;letter-spacing:0.25px;">25-10-19</div>
<div class="t" style="left:116px;top:300.5px;width:90px;height:16px;line-height:16px;text-align:center;color:#008000;font-size:12px;"><span class="c">纽伦堡</span></div>
<div class="t" style="left:207px;top:300.5px;width:88px;height:16px;line-height:16px;text-align:center;color:#222;font-size:12px;letter-spacing:0.5px;"><span style="color:#ff0000">1-1</span>(1-0)</div>
<div class="t" style="left:296px;top:300.5px;width:39px;height:16px;line-height:16px;text-align:center;color:#222;font-size:12px;">3-7</div>
<div class="t" style="left:336px;top:300.5px;width:91px;height:16px;line-height:16px;text-align:center;color:#222;font-size:12px;"><span class="c">荷尔斯泰因</span></div>
<div class="t" style="left:428px;top:300.5px;width:47px;height:16px;line-height:16px;text-align:center;color:#222;font-size:12px;">0.87</div>
<div class="t" style="left:476px;top:300.5px;width:54px;height:16px;line-height:16px;text-align:center;color:#222;font-size:12px;"><span class="c">平手</span></div>
<div class="t" style="left:531px;top:300.5px;width:50px;height:16px;line-height:16px;text-align:center;color:#222;font-size:12px;">1.01</div>
<div class="t" style="left:582px;top:300.5px;width:61px;height:16px;line-height:16px;text-align:center;color:#222;font-size:12px;">2.49</div>
<div class="t" style="left:644px;top:300.5px;width:63px;height:16px;line-height:16px;text-align:center;color:#222;font-size:12px;">3.41</div>
<div class="t" style="left:708px;top:300.5px;width:63px;height:16px;line-height:16px;text-align:center;color:#222;font-size:12px;">2.65</div>
<div class="t" style="left:772px;top:300.5px;width:38px;height:16px;line-height:16px;text-align:center;color:#0000ff;font-size:12px;"><span class="c">平</span></div>
<div class="t" style="left:811px;top:300.5px;width:39px;height:16px;line-height:16px;text-align:center;color:#0000ff;font-size:12px;"><span class="c">走</span></div>
<div class="t" style="left:851px;top:300.5px;width:57px;height:16px;line-height:16px;text-align:center;color:#008000;font-size:12px;"><span class="c">小</span></div>
<div class="a" style="left:0px;top:323px;width:908px;height:27px;background:#ffffff;"></div>
<div class="a" style="left:428px;top:323px;width:153px;height:27px;background:#fef9f6;"></div>
<div class="a" style="left:582px;top:323px;width:189px;height:27px;background:#f0f8fc;"></div>
<div class="a" style="left:0px;top:323px;width:38px;height:27px;background:#cc00cc;"></div>
<div class="a" style="left:38px;top:350px;width:870px;height:1px;background:#bcbcbc;"></div>
<div class="a" style="left:0px;top:350px;width:38px;height:1px;background:#bcbcbc;"></div>
<div class="a" style="left:115px;top:323px;width:1px;height:27px;background:#bcbcbc;"></div>
<div class="a" style="left:206px;top:323px;width:1px;height:27px;background:#bcbcbc;"></div>
<div class="a" style="left:295px;top:323px;width:1px;height:27px;background:#bcbcbc;"></div>
<div class="a" style="left:335px;top:323px;width:1px;height:27px;background:#bcbcbc;"></div>
<div class="a" style="left:427px;top:323px;width:1px;height:27px;background:#bcbcbc;"></div>
<div class="a" style="left:475px;top:323px;width:1px;height:27px;background:#bcbcbc;"></div>
<div class="a" style="left:530px;top:323px;width:1px;height:27px;background:#bcbcbc;"></div>
<div class="a" style="left:581px;top:323px;width:1px;height:27px;background:#bcbcbc;"></div>
<div class="a" style="left:643px;top:323px;width:1px;height:27px;background:#bcbcbc;"></div>
<div class="a" style="left:707px;top:323px;width:1px;height:27px;background:#bcbcbc;"></div>
<div class="a" style="left:771px;top:323px;width:1px;height:27px;background:#bcbcbc;"></div>
<div class="a" style="left:810px;top:323px;width:1px;height:27px;background:#bcbcbc;"></div>
<div class="a" style="left:850px;top:323px;width:1px;height:27px;background:#bcbcbc;"></div>
<div class="t" style="left:0px;top:328.5px;width:38px;height:16px;line-height:16px;text-align:center;color:#fff;font-size:12px;"><span class="c">德乙</span></div>
<div class="t" style="left:39px;top:328.5px;width:76px;height:16px;line-height:16px;text-align:center;color:#222;font-size:12px;letter-spacing:0.25px;">25-10-04</div>
<div class="t" style="left:116px;top:328.5px;width:90px;height:16px;line-height:16px;text-align:center;color:#222;font-size:12px;"><span class="c">杜塞尔多夫</span></div>
<div class="t" style="left:207px;top:328.5px;width:88px;height:16px;line-height:16px;text-align:center;color:#222;font-size:12px;letter-spacing:0.5px;"><span style="color:#ff0000">2-3</span>(0-1)</div>
<div class="t" style="left:296px;top:328.5px;width:39px;height:16px;line-height:16px;text-align:center;color:#222;font-size:12px;">1-2</div>
<div class="t" style="left:336px;top:328.5px;width:91px;height:16px;line-height:16px;text-align:center;color:#008000;font-size:12px;"><span class="c">纽伦堡</span></div>
<div class="t" style="left:428px;top:328.5px;width:47px;height:16px;line-height:16px;text-align:center;color:#222;font-size:12px;">0.90</div>
<div class="t" style="left:476px;top:328.5px;width:54px;height:16px;line-height:16px;text-align:center;color:#222;font-size:12px;"><span class="c">平手</span></div>
<div class="t" style="left:531px;top:328.5px;width:50px;height:16px;line-height:16px;text-align:center;color:#222;font-size:12px;">0.98</div>
<div class="t" style="left:582px;top:328.5px;width:61px;height:16px;line-height:16px;text-align:center;color:#222;font-size:12px;">2.37</div>
<div class="t" style="left:644px;top:328.5px;width:63px;height:16px;line-height:16px;text-align:center;color:#222;font-size:12px;">3.59</div>
<div class="t" style="left:708px;top:328.5px;width:63px;height:16px;line-height:16px;text-align:center;color:#222;font-size:12px;">2.71</div>
<div class="t" style="left:772px;top:328.5px;width:38px;height:16px;line-height:16px;text-align:center;color:#ff0000;font-size:12px;"><span class="c">胜</span></div>
<div class="t" style="left:811px;top:328.5px;width:39px;height:16px;line-height:16px;text-align:center;color:#ff0000;font-size:12px;"><span class="c">赢</span></div>
<div class="t" style="left:851px;top:328.5px;width:57px;height:16px;line-height:16px;text-align:center;color:#ff0000;font-size:12px;"><span class="c">大</span></div>
<div class="a" style="left:0px;top:351px;width:908px;height:27px;background:#efefef;"></div>
<div class="a" style="left:428px;top:351px;width:153px;height:27px;background:#fef9f6;"></div>
<div class="a" style="left:582px;top:351px;width:189px;height:27px;background:#f0f8fc;"></div>
<div class="a" style="left:0px;top:351px;width:38px;height:27px;background:#cc00cc;"></div>
<div class="a" style="left:38px;top:378px;width:870px;height:1px;background:#bcbcbc;"></div>
<div class="a" style="left:0px;top:378px;width:38px;height:1px;background:#eef3ee;"></div>
<div class="a" style="left:115px;top:351px;width:1px;height:27px;background:#bcbcbc;"></div>
<div class="a" style="left:206px;top:351px;width:1px;height:27px;background:#bcbcbc;"></div>
<div class="a" style="left:295px;top:351px;width:1px;height:27px;background:#bcbcbc;"></div>
<div class="a" style="left:335px;top:351px;width:1px;height:27px;background:#bcbcbc;"></div>
<div class="a" style="left:427px;top:351px;width:1px;height:27px;background:#bcbcbc;"></div>
<div class="a" style="left:475px;top:351px;width:1px;height:27px;background:#bcbcbc;"></div>
<div class="a" style="left:530px;top:351px;width:1px;height:27px;background:#bcbcbc;"></div>
<div class="a" style="left:581px;top:351px;width:1px;height:27px;background:#bcbcbc;"></div>
<div class="a" style="left:643px;top:351px;width:1px;height:27px;background:#bcbcbc;"></div>
<div class="a" style="left:707px;top:351px;width:1px;height:27px;background:#bcbcbc;"></div>
<div class="a" style="left:771px;top:351px;width:1px;height:27px;background:#bcbcbc;"></div>
<div class="a" style="left:810px;top:351px;width:1px;height:27px;background:#bcbcbc;"></div>
<div class="a" style="left:850px;top:351px;width:1px;height:27px;background:#bcbcbc;"></div>
<div class="t" style="left:0px;top:356.5px;width:38px;height:16px;line-height:16px;text-align:center;color:#fff;font-size:12px;"><span class="c">德乙</span></div>
<div class="t" style="left:39px;top:356.5px;width:76px;height:16px;line-height:16px;text-align:center;color:#222;font-size:12px;letter-spacing:0.25px;">25-09-28</div>
<div class="t" style="left:116px;top:356.5px;width:90px;height:16px;line-height:16px;text-align:center;color:#008000;font-size:12px;"><span class="c">纽伦堡</span></div>
<div class="t" style="left:207px;top:356.5px;width:88px;height:16px;line-height:16px;text-align:center;color:#222;font-size:12px;letter-spacing:0.5px;"><span style="color:#ff0000">0-3</span>(0-2)</div>
<div class="t" style="left:296px;top:356.5px;width:39px;height:16px;line-height:16px;text-align:center;color:#222;font-size:12px;">6-1</div>
<div class="t" style="left:336px;top:356.5px;width:91px;height:16px;line-height:16px;text-align:center;color:#222;font-size:12px;"><span class="c">柏林赫塔</span></div>
<div class="t" style="left:428px;top:356.5px;width:47px;height:16px;line-height:16px;text-align:center;color:#222;font-size:12px;">1.05</div>
<div class="t" style="left:476px;top:356.5px;width:54px;height:16px;line-height:16px;text-align:center;color:#222;font-size:12px;"><span class="c">平</span>/<span class="c">半</span></div>
<div class="t" style="left:531px;top:356.5px;width:50px;height:16px;line-height:16px;text-align:center;color:#222;font-size:12px;">0.83</div>
<div class="t" style="left:582px;top:356.5px;width:61px;height:16px;line-height:16px;text-align:center;color:#222;font-size:12px;">2.23</div>
<div class="t" style="left:644px;top:356.5px;width:63px;height:16px;line-height:16px;text-align:center;color:#222;font-size:12px;">3.57</div>
<div class="t" style="left:708px;top:356.5px;width:63px;height:16px;line-height:16px;text-align:center;color:#222;font-size:12px;">2.95</div>
<div class="t" style="left:772px;top:356.5px;width:38px;height:16px;line-height:16px;text-align:center;color:#008000;font-size:12px;"><span class="c">负</span></div>
<div class="t" style="left:811px;top:356.5px;width:39px;height:16px;line-height:16px;text-align:center;color:#008000;font-size:12px;"><span class="c">输</span></div>
<div class="t" style="left:851px;top:356.5px;width:57px;height:16px;line-height:16px;text-align:center;color:#0000ff;font-size:12px;"><span class="c">走</span></div>
<div class="a" style="left:0px;top:379px;width:908px;height:27px;background:#fff;"></div>
<div class="t" style="left:0px;top:385.0px;width:908px;height:16px;line-height:16px;text-align:center;color:#222;font-size:12px;letter-spacing:0.4px;"><span class="c">近</span><span style="color:#f00">10</span><span class="c">场</span>,<span class="c">胜</span>4<span class="c">平</span>3<span class="c">负</span>3, <span class="c">胜率</span>:<span style="color:#00f">40%</span> <span class="c">赢率</span>:<span style="color:#00f">40%</span> <span class="c">大</span>:<span style="color:#00f">40%</span> <span class="c">单率</span>:<span style="color:#00f">60%</span></div>
<div class="a" style="left:0px;top:406px;width:908px;height:1px;background:#bcbcbc;"></div>
<div class="a" style="left:0px;top:407px;width:908px;height:25px;background:#dce3ec;"></div>
<div class="t" style="left:19px;top:414.5px;width:281px;height:16px;line-height:16px;text-align:left;color:#222;font-size:13px;font-weight:bold;"><span class="c">汉诺威</span>96</div>
<div class="a" style="left:0px;top:432px;width:908px;height:1px;background:#bcbcbc;"></div>
<div class="a" style="left:0px;top:433px;width:908px;height:40px;background:#dce3ec;"></div>
<div class="a" style="left:0px;top:473px;width:908px;height:1px;background:#bcbcbc;"></div>
<div class="a" style="left:453px;top:455px;width:455px;height:1px;background:#bcbcbc;"></div>
<div class="a" style="left:69px;top:432px;width:1px;height:41px;background:#bcbcbc;"></div>
<div class="a" style="left:141px;top:432px;width:1px;height:41px;background:#bcbcbc;"></div>
<div class="a" style="left:244px;top:432px;width:1px;height:41px;background:#bcbcbc;"></div>
<div class="a" style="left:328px;top:432px;width:1px;height:41px;background:#bcbcbc;"></div>
<div class="a" style="left:366px;top:432px;width:1px;height:41px;background:#bcbcbc;"></div>
<div class="a" style="left:453px;top:432px;width:1px;height:41px;background:#bcbcbc;"></div>
<div class="a" style="left:492px;top:455px;width:1px;height:18px;background:#bcbcbc;"></div>
<div class="a" style="left:557px;top:455px;width:1px;height:18px;background:#bcbcbc;"></div>
<div class="a" style="left:598px;top:432px;width:1px;height:41px;background:#bcbcbc;"></div>
<div class="a" style="left:657px;top:455px;width:1px;height:18px;background:#bcbcbc;"></div>
<div class="a" style="left:718px;top:455px;width:1px;height:18px;background:#bcbcbc;"></div>
<div class="a" style="left:779px;top:432px;width:1px;height:41px;background:#bcbcbc;"></div>
<div class="a" style="left:816px;top:455px;width:1px;height:18px;background:#bcbcbc;"></div>
<div class="a" style="left:853px;top:455px;width:1px;height:18px;background:#bcbcbc;"></div>
<div class="t" style="left:0px;top:445.0px;width:69px;height:16px;line-height:16px;text-align:center;color:#222;font-size:12px;"><span class="c">类型</span></div>
<div class="t" style="left:70px;top:445.0px;width:71px;height:16px;line-height:16px;text-align:center;color:#222;font-size:12px;"><span class="c">日期</span></div>
<div class="t" style="left:142px;top:445.0px;width:102px;height:16px;line-height:16px;text-align:center;color:#222;font-size:12px;"><span class="c">主场</span></div>
<div class="t" style="left:245px;top:445.0px;width:83px;height:16px;line-height:16px;text-align:center;color:#222;font-size:12px;"><span class="c">比分</span>(<span class="c">半场</span>)</div>
<div class="t" style="left:329px;top:445.0px;width:37px;height:16px;line-height:16px;text-align:center;color:#222;font-size:12px;"><span class="c">角球</span></div>
<div class="t" style="left:367px;top:445.0px;width:86px;height:16px;line-height:16px;text-align:center;color:#222;font-size:12px;"><span class="c">客场</span></div>
<div class="t" style="left:454px;top:456.5px;width:38px;height:16px;line-height:16px;text-align:center;color:#222;font-size:12px;"><span class="c">主</span></div>
<div class="t" style="left:493px;top:456.5px;width:64px;height:16px;line-height:16px;text-align:center;color:#222;font-size:12px;"><span class="c">盘口</span></div>
<div class="t" style="left:558px;top:456.5px;width:40px;height:16px;line-height:16px;text-align:center;color:#222;font-size:12px;"><span class="c">客</span></div>
<div class="t" style="left:599px;top:456.5px;width:58px;height:16px;line-height:16px;text-align:center;color:#222;font-size:12px;"><span class="c">主</span></div>
<div class="t" style="left:658px;top:456.5px;width:60px;height:16px;line-height:16px;text-align:center;color:#222;font-size:12px;"><span class="c">和</span></div>
<div class="t" style="left:719px;top:456.5px;width:60px;height:16px;line-height:16px;text-align:center;color:#222;font-size:12px;"><span class="c">客</span></div>
<div class="t" style="left:780px;top:456.5px;width:36px;height:16px;line-height:16px;text-align:center;color:#222;font-size:12px;"><span class="c">胜负</span></div>
<div class="t" style="left:817px;top:456.5px;width:36px;height:16px;line-height:16px;text-align:center;color:#222;font-size:12px;"><span class="c">让球</span></div>
<div class="t" style="left:854px;top:456.5px;width:54px;height:16px;line-height:16px;text-align:center;color:#222;font-size:12px;"><span class="c">进球数</span></div>
<div class="t" style="left:359px;top:415px;height:16px;line-height:16px;color:#222;font-size:12px;"><span class="c">近</span></div>
<div class="sel" style="left:375px;top:414px;width:34px;height:14px;line-height:14px;font-size:12px"><span style="position:absolute;left:4px;top:1px;font-size:11px">10</span><span class="tri"></span></div>
<div class="t" style="left:415px;top:415px;height:16px;line-height:16px;color:#222;font-size:12px;"><span class="c">场</span></div>
<div class="cb" style="left:431px;top:417px"></div>
<div class="t" style="left:448px;top:415px;height:16px;line-height:16px;color:#222;font-size:12px;"><span class="c">同客</span></div>
<div class="cb" style="left:477px;top:417px"><svg width="9" height="9" viewBox="0 0 9 9" style="position:absolute;left:1px;top:1px"><path d="M1 4.6 L3.5 7.3 L8.2 1.6" fill="none" stroke="#383838" stroke-width="2.4"/></svg></div>
<div class="t" style="left:490px;top:415px;height:16px;line-height:16px;color:#222;font-size:12px;"><span class="c">德乙</span></div>
<div class="cb" style="left:514px;top:417px"><svg width="9" height="9" viewBox="0 0 9 9" style="position:absolute;left:1px;top:1px"><path d="M1 4.6 L3.5 7.3 L8.2 1.6" fill="none" stroke="#383838" stroke-width="2.4"/></svg></div>
<div class="t" style="left:527px;top:415px;height:16px;line-height:16px;color:#222;font-size:12px;"><span class="c">球会友谊</span></div>
<div class="cb" style="left:575px;top:417px"><svg width="9" height="9" viewBox="0 0 9 9" style="position:absolute;left:1px;top:1px"><path d="M1 4.6 L3.5 7.3 L8.2 1.6" fill="none" stroke="#383838" stroke-width="2.4"/></svg></div>
<div class="t" style="left:588px;top:415px;height:16px;line-height:16px;color:#222;font-size:12px;"><span class="c">德国杯</span></div>
<div class="sel" style="left:474px;top:434px;width:57px;height:18px;line-height:18px;font-size:13px"><span style="position:absolute;left:4px;top:1px">Crow*</span><span class="tri"></span></div>
<div class="sel" style="left:541px;top:434px;width:34px;height:18px;line-height:18px;font-size:13px"><span style="position:absolute;left:4px;top:1px;font-size:13px"><span class="c">终</span></span><span class="tri"></span></div>
<div class="sel" style="left:626px;top:434px;width:81px;height:18px;line-height:18px;font-size:13px"><span style="position:absolute;left:4px;top:1px;font-size:12px"><span class="c">胜平负均值</span></span><span class="tri"></span></div>
<div class="sel" style="left:717px;top:434px;width:34px;height:18px;line-height:18px;font-size:13px"><span style="position:absolute;left:4px;top:1px;font-size:13px"><span class="c">终</span></span><span class="tri"></span></div>
<div class="sel" style="left:821px;top:434px;width:45px;height:18px;line-height:18px;font-size:13px"><span style="position:absolute;left:4px;top:1px;font-size:12px"><span class="c">全场</span></span><span class="tri"></span></div>
<div class="a" style="left:0px;top:474px;width:908px;height:27px;background:#ffffff;"></div>
<div class="a" style="left:454px;top:474px;width:144px;height:27px;background:#fef9f6;"></div>
<div class="a" style="left:599px;top:474px;width:180px;height:27px;background:#f0f8fc;"></div>
<div class="a" style="left:0px;top:474px;width:69px;height:27px;background:#cc00cc;"></div>
<div class="a" style="left:0px;top:473px;width:69px;height:1px;background:#e4ebe6;"></div>
<div class="a" style="left:69px;top:501px;width:839px;height:1px;background:#bcbcbc;"></div>
<div class="a" style="left:0px;top:501px;width:69px;height:1px;background:#bcbcbc;"></div>
<div class="a" style="left:141px;top:474px;width:1px;height:27px;background:#bcbcbc;"></div>
<div class="a" style="left:244px;top:474px;width:1px;height:27px;background:#bcbcbc;"></div>
<div class="a" style="left:328px;top:474px;width:1px;height:27px;background:#bcbcbc;"></div>
<div class="a" style="left:366px;top:474px;width:1px;height:27px;background:#bcbcbc;"></div>
<div class="a" style="left:453px;top:474px;width:1px;height:27px;background:#bcbcbc;"></div>
<div class="a" style="left:492px;top:474px;width:1px;height:27px;background:#bcbcbc;"></div>
<div class="a" style="left:557px;top:474px;width:1px;height:27px;background:#bcbcbc;"></div>
<div class="a" style="left:598px;top:474px;width:1px;height:27px;background:#bcbcbc;"></div>
<div class="a" style="left:657px;top:474px;width:1px;height:27px;background:#bcbcbc;"></div>
<div class="a" style="left:718px;top:474px;width:1px;height:27px;background:#bcbcbc;"></div>
<div class="a" style="left:779px;top:474px;width:1px;height:27px;background:#bcbcbc;"></div>
<div class="a" style="left:816px;top:474px;width:1px;height:27px;background:#bcbcbc;"></div>
<div class="a" style="left:853px;top:474px;width:1px;height:27px;background:#bcbcbc;"></div>
<div class="t" style="left:0px;top:479.5px;width:67px;height:16px;line-height:16px;text-align:center;color:#fff;font-size:12px;"><span class="c">德乙</span></div>
<div class="t" style="left:70px;top:479.5px;width:71px;height:16px;line-height:16px;text-align:center;color:#222;font-size:12px;letter-spacing:0.25px;">25-12-14</div>
<div class="t" style="left:142px;top:479.5px;width:102px;height:16px;line-height:16px;text-align:center;color:#008000;font-size:12px;"><span class="c">汉诺威</span>96</div>
<div class="t" style="left:245px;top:479.5px;width:83px;height:16px;line-height:16px;text-align:center;color:#222;font-size:12px;letter-spacing:0.5px;"><span style="color:#ff0000">0-0</span>(0-0)</div>
<div class="t" style="left:329px;top:479.5px;width:37px;height:16px;line-height:16px;text-align:center;color:#222;font-size:12px;">7-0</div>
<div class="t" style="left:367px;top:479.5px;width:86px;height:16px;line-height:16px;text-align:center;color:#222;font-size:12px;"><span class="c">波鸿</span></div>
<div class="t" style="left:454px;top:479.5px;width:38px;height:16px;line-height:16px;text-align:center;color:#222;font-size:12px;">0.85</div>
<div class="t" style="left:493px;top:479.5px;width:64px;height:16px;line-height:16px;text-align:center;color:#222;font-size:12px;"><span class="c">半球</span></div>
<div class="t" style="left:558px;top:479.5px;width:40px;height:16px;line-height:16px;text-align:center;color:#222;font-size:12px;">1.03</div>
<div class="t" style="left:599px;top:479.5px;width:58px;height:16px;line-height:16px;text-align:center;color:#222;font-size:12px;">1.77</div>
<div class="t" style="left:658px;top:479.5px;width:60px;height:16px;line-height:16px;text-align:center;color:#222;font-size:12px;">3.63</div>
<div class="t" style="left:719px;top:479.5px;width:60px;height:16px;line-height:16px;text-align:center;color:#222;font-size:12px;">4.40</div>
<div class="t" style="left:780px;top:479.5px;width:36px;height:16px;line-height:16px;text-align:center;color:#0000ff;font-size:12px;"><span class="c">平</span></div>
<div class="t" style="left:817px;top:479.5px;width:36px;height:16px;line-height:16px;text-align:center;color:#008000;font-size:12px;"><span class="c">输</span></div>
<div class="t" style="left:854px;top:479.5px;width:54px;height:16px;line-height:16px;text-align:center;color:#008000;font-size:12px;"><span class="c">小</span></div>
<div class="a" style="left:0px;top:502px;width:908px;height:27px;background:#efefef;"></div>
<div class="a" style="left:454px;top:502px;width:144px;height:27px;background:#fef9f6;"></div>
<div class="a" style="left:599px;top:502px;width:180px;height:27px;background:#f0f8fc;"></div>
<div class="a" style="left:0px;top:502px;width:69px;height:27px;background:#cc00cc;"></div>
<div class="a" style="left:69px;top:529px;width:839px;height:1px;background:#bcbcbc;"></div>
<div class="a" style="left:0px;top:529px;width:69px;height:1px;background:#bcbcbc;"></div>
<div class="a" style="left:141px;top:502px;width:1px;height:27px;background:#bcbcbc;"></div>
<div class="a" style="left:244px;top:502px;width:1px;height:27px;background:#bcbcbc;"></div>
<div class="a" style="left:328px;top:502px;width:1px;height:27px;background:#bcbcbc;"></div>
<div class="a" style="left:366px;top:502px;width:1px;height:27px;background:#bcbcbc;"></div>
<div class="a" style="left:453px;top:502px;width:1px;height:27px;background:#bcbcbc;"></div>
<div class="a" style="left:492px;top:502px;width:1px;height:27px;background:#bcbcbc;"></div>
<div class="a" style="left:557px;top:502px;width:1px;height:27px;background:#bcbcbc;"></div>
<div class="a" style="left:598px;top:502px;width:1px;height:27px;background:#bcbcbc;"></div>
<div class="a" style="left:657px;top:502px;width:1px;height:27px;background:#bcbcbc;"></div>
<div class="a" style="left:718px;top:502px;width:1px;height:27px;background:#bcbcbc;"></div>
<div class="a" style="left:779px;top:502px;width:1px;height:27px;background:#bcbcbc;"></div>
<div class="a" style="left:816px;top:502px;width:1px;height:27px;background:#bcbcbc;"></div>
<div class="a" style="left:853px;top:502px;width:1px;height:27px;background:#bcbcbc;"></div>
<div class="t" style="left:0px;top:507.5px;width:67px;height:16px;line-height:16px;text-align:center;color:#fff;font-size:12px;"><span class="c">德乙</span></div>
<div class="t" style="left:70px;top:507.5px;width:71px;height:16px;line-height:16px;text-align:center;color:#222;font-size:12px;letter-spacing:0.25px;">25-12-06</div>
<div class="t" style="left:142px;top:507.5px;width:102px;height:16px;line-height:16px;text-align:center;color:#222;font-size:12px;"><span class="c">普鲁士明斯特</span></div>
<div class="t" style="left:245px;top:507.5px;width:83px;height:16px;line-height:16px;text-align:center;color:#222;font-size:12px;letter-spacing:0.5px;"><span style="color:#ff0000">2-2</span>(0-1)</div>
<div class="t" style="left:329px;top:507.5px;width:37px;height:16px;line-height:16px;text-align:center;color:#222;font-size:12px;">5-2</div>
<div class="t" style="left:367px;top:507.5px;width:86px;height:16px;line-height:16px;text-align:center;color:#008000;font-size:12px;"><span class="c">汉诺威</span>96</div>
<div class="t" style="left:454px;top:507.5px;width:38px;height:16px;line-height:16px;text-align:center;color:#222;font-size:12px;">0.85</div>
<div class="t" style="left:493px;top:507.5px;width:64px;height:16px;line-height:16px;text-align:center;color:#222;font-size:12px;"><span style="color:#ff0000">*</span><span class="c">半</span>/<span class="c">一</span></div>
<div class="t" style="left:558px;top:507.5px;width:40px;height:16px;line-height:16px;text-align:center;color:#222;font-size:12px;">1.03</div>
<div class="t" style="left:599px;top:507.5px;width:58px;height:16px;line-height:16px;text-align:center;color:#222;font-size:12px;">4.12</div>
<div class="t" style="left:658px;top:507.5px;width:60px;height:16px;line-height:16px;text-align:center;color:#222;font-size:12px;">3.81</div>
<div class="t" style="left:719px;top:507.5px;width:60px;height:16px;line-height:16px;text-align:center;color:#222;font-size:12px;">1.77</div>
<div class="t" style="left:780px;top:507.5px;width:36px;height:16px;line-height:16px;text-align:center;color:#0000ff;font-size:12px;"><span class="c">平</span></div>
<div class="t" style="left:817px;top:507.5px;width:36px;height:16px;line-height:16px;text-align:center;color:#008000;font-size:12px;"><span class="c">输</span></div>
<div class="t" style="left:854px;top:507.5px;width:54px;height:16px;line-height:16px;text-align:center;color:#ff0000;font-size:12px;"><span class="c">大</span></div>
<div class="a" style="left:0px;top:530px;width:908px;height:27px;background:#ffffff;"></div>
<div class="a" style="left:454px;top:530px;width:144px;height:27px;background:#fef9f6;"></div>
<div class="a" style="left:599px;top:530px;width:180px;height:27px;background:#f0f8fc;"></div>
<div class="a" style="left:0px;top:530px;width:69px;height:27px;background:#cc00cc;"></div>
<div class="a" style="left:69px;top:557px;width:839px;height:1px;background:#bcbcbc;"></div>
<div class="a" style="left:0px;top:557px;width:69px;height:1px;background:#bcbcbc;"></div>
<div class="a" style="left:141px;top:530px;width:1px;height:27px;background:#bcbcbc;"></div>
<div class="a" style="left:244px;top:530px;width:1px;height:27px;background:#bcbcbc;"></div>
<div class="a" style="left:328px;top:530px;width:1px;height:27px;background:#bcbcbc;"></div>
<div class="a" style="left:366px;top:530px;width:1px;height:27px;background:#bcbcbc;"></div>
<div class="a" style="left:453px;top:530px;width:1px;height:27px;background:#bcbcbc;"></div>
<div class="a" style="left:492px;top:530px;width:1px;height:27px;background:#bcbcbc;"></div>
<div class="a" style="left:557px;top:530px;width:1px;height:27px;background:#bcbcbc;"></div>
<div class="a" style="left:598px;top:530px;width:1px;height:27px;background:#bcbcbc;"></div>
<div class="a" style="left:657px;top:530px;width:1px;height:27px;background:#bcbcbc;"></div>
<div class="a" style="left:718px;top:530px;width:1px;height:27px;background:#bcbcbc;"></div>
<div class="a" style="left:779px;top:530px;width:1px;height:27px;background:#bcbcbc;"></div>
<div class="a" style="left:816px;top:530px;width:1px;height:27px;background:#bcbcbc;"></div>
<div class="a" style="left:853px;top:530px;width:1px;height:27px;background:#bcbcbc;"></div>
<div class="t" style="left:0px;top:535.5px;width:67px;height:16px;line-height:16px;text-align:center;color:#fff;font-size:12px;"><span class="c">德乙</span></div>
<div class="t" style="left:70px;top:535.5px;width:71px;height:16px;line-height:16px;text-align:center;color:#222;font-size:12px;letter-spacing:0.25px;">25-11-29</div>
<div class="t" style="left:142px;top:535.5px;width:102px;height:16px;line-height:16px;text-align:center;color:#008000;font-size:12px;"><span class="c">汉诺威</span>96</div>
<div class="t" style="left:245px;top:535.5px;width:83px;height:16px;line-height:16px;text-align:center;color:#222;font-size:12px;letter-spacing:0.5px;"><span style="color:#ff0000">3-0</span>(0-0)</div>
<div class="t" style="left:329px;top:535.5px;width:37px;height:16px;line-height:16px;text-align:center;color:#222;font-size:12px;">4-1</div>
<div class="t" style="left:367px;top:535.5px;width:86px;height:16px;line-height:16px;text-align:center;color:#222;font-size:12px;"><span class="c">卡尔斯鲁厄</span></div>
<div class="t" style="left:454px;top:535.5px;width:38px;height:16px;line-height:16px;text-align:center;color:#222;font-size:12px;">0.89</div>
<div class="t" style="left:493px;top:535.5px;width:64px;height:16px;line-height:16px;text-align:center;color:#222;font-size:12px;"><span class="c">一</span>/<span class="c">球半</span></div>
<div class="t" style="left:558px;top:535.5px;width:40px;height:16px;line-height:16px;text-align:center;color:#222;font-size:12px;">0.99</div>
<div class="t" style="left:599px;top:535.5px;width:58px;height:16px;line-height:16px;text-align:center;color:#222;font-size:12px;">1.44</div>
<div class="t" style="left:658px;top:535.5px;width:60px;height:16px;line-height:16px;text-align:center;color:#222;font-size:12px;">4.78</div>
<div class="t" style="left:719px;top:535.5px;width:60px;height:16px;line-height:16px;text-align:center;color:#222;font-size:12px;">5.99</div>
<div class="t" style="left:780px;top:535.5px;width:36px;height:16px;line-height:16px;text-align:center;color:#ff0000;font-size:12px;"><span class="c">胜</span></div>
<div class="t" style="left:817px;top:535.5px;width:36px;height:16px;line-height:16px;text-align:center;color:#ff0000;font-size:12px;"><span class="c">赢</span></div>
<div class="t" style="left:854px;top:535.5px;width:54px;height:16px;line-height:16px;text-align:center;color:#008000;font-size:12px;"><span class="c">小</span></div>
<div class="a" style="left:0px;top:558px;width:908px;height:27px;background:#efefef;"></div>
<div class="a" style="left:454px;top:558px;width:144px;height:27px;background:#fef9f6;"></div>
<div class="a" style="left:599px;top:558px;width:180px;height:27px;background:#f0f8fc;"></div>
<div class="a" style="left:0px;top:558px;width:69px;height:27px;background:#cc00cc;"></div>
<div class="a" style="left:69px;top:585px;width:839px;height:1px;background:#bcbcbc;"></div>
<div class="a" style="left:0px;top:585px;width:69px;height:1px;background:#bcbcbc;"></div>
<div class="a" style="left:141px;top:558px;width:1px;height:27px;background:#bcbcbc;"></div>
<div class="a" style="left:244px;top:558px;width:1px;height:27px;background:#bcbcbc;"></div>
<div class="a" style="left:328px;top:558px;width:1px;height:27px;background:#bcbcbc;"></div>
<div class="a" style="left:366px;top:558px;width:1px;height:27px;background:#bcbcbc;"></div>
<div class="a" style="left:453px;top:558px;width:1px;height:27px;background:#bcbcbc;"></div>
<div class="a" style="left:492px;top:558px;width:1px;height:27px;background:#bcbcbc;"></div>
<div class="a" style="left:557px;top:558px;width:1px;height:27px;background:#bcbcbc;"></div>
<div class="a" style="left:598px;top:558px;width:1px;height:27px;background:#bcbcbc;"></div>
<div class="a" style="left:657px;top:558px;width:1px;height:27px;background:#bcbcbc;"></div>
<div class="a" style="left:718px;top:558px;width:1px;height:27px;background:#bcbcbc;"></div>
<div class="a" style="left:779px;top:558px;width:1px;height:27px;background:#bcbcbc;"></div>
<div class="a" style="left:816px;top:558px;width:1px;height:27px;background:#bcbcbc;"></div>
<div class="a" style="left:853px;top:558px;width:1px;height:27px;background:#bcbcbc;"></div>
<div class="t" style="left:0px;top:563.5px;width:67px;height:16px;line-height:16px;text-align:center;color:#fff;font-size:12px;"><span class="c">德乙</span></div>
<div class="t" style="left:70px;top:563.5px;width:71px;height:16px;line-height:16px;text-align:center;color:#222;font-size:12px;letter-spacing:0.25px;">25-11-22</div>
<div class="t" style="left:142px;top:563.5px;width:102px;height:16px;line-height:16px;text-align:center;color:#222;font-size:12px;"><span class="c">帕德博恩</span></div>
<div class="t" style="left:245px;top:563.5px;width:83px;height:16px;line-height:16px;text-align:center;color:#222;font-size:12px;letter-spacing:0.5px;"><span style="color:#ff0000">0-2</span>(0-2)</div>
<div class="t" style="left:329px;top:563.5px;width:37px;height:16px;line-height:16px;text-align:center;color:#222;font-size:12px;">11-4</div>
<div class="t" style="left:367px;top:563.5px;width:86px;height:16px;line-height:16px;text-align:center;color:#008000;font-size:12px;"><span class="c">汉诺威</span>96</div>
<div class="t" style="left:454px;top:563.5px;width:38px;height:16px;line-height:16px;text-align:center;color:#222;font-size:12px;">0.98</div>
<div class="t" style="left:493px;top:563.5px;width:64px;height:16px;line-height:16px;text-align:center;color:#222;font-size:12px;"><span class="c">平</span>/<span class="c">半</span></div>
<div class="t" style="left:558px;top:563.5px;width:40px;height:16px;line-height:16px;text-align:center;color:#222;font-size:12px;">0.90</div>
<div class="t" style="left:599px;top:563.5px;width:58px;height:16px;line-height:16px;text-align:center;color:#222;font-size:12px;">2.14</div>
<div class="t" style="left:658px;top:563.5px;width:60px;height:16px;line-height:16px;text-align:center;color:#222;font-size:12px;">3.50</div>
<div class="t" style="left:719px;top:563.5px;width:60px;height:16px;line-height:16px;text-align:center;color:#222;font-size:12px;">3.15</div>
<div class="t" style="left:780px;top:563.5px;width:36px;height:16px;line-height:16px;text-align:center;color:#ff0000;font-size:12px;"><span class="c">胜</span></div>
<div class="t" style="left:817px;top:563.5px;width:36px;height:16px;line-height:16px;text-align:center;color:#ff0000;font-size:12px;"><span class="c">赢</span></div>
<div class="t" style="left:854px;top:563.5px;width:54px;height:16px;line-height:16px;text-align:center;color:#008000;font-size:12px;"><span class="c">小</span></div>
<div class="a" style="left:0px;top:586px;width:908px;height:27px;background:#ffffff;"></div>
<div class="a" style="left:454px;top:586px;width:144px;height:27px;background:#fef9f6;"></div>
<div class="a" style="left:599px;top:586px;width:180px;height:27px;background:#f0f8fc;"></div>
<div class="a" style="left:0px;top:586px;width:69px;height:27px;background:#cc00cc;"></div>
<div class="a" style="left:69px;top:613px;width:839px;height:1px;background:#bcbcbc;"></div>
<div class="a" style="left:0px;top:613px;width:69px;height:1px;background:#bcbcbc;"></div>
<div class="a" style="left:141px;top:586px;width:1px;height:27px;background:#bcbcbc;"></div>
<div class="a" style="left:244px;top:586px;width:1px;height:27px;background:#bcbcbc;"></div>
<div class="a" style="left:328px;top:586px;width:1px;height:27px;background:#bcbcbc;"></div>
<div class="a" style="left:366px;top:586px;width:1px;height:27px;background:#bcbcbc;"></div>
<div class="a" style="left:453px;top:586px;width:1px;height:27px;background:#bcbcbc;"></div>
<div class="a" style="left:492px;top:586px;width:1px;height:27px;background:#bcbcbc;"></div>
<div class="a" style="left:557px;top:586px;width:1px;height:27px;background:#bcbcbc;"></div>
<div class="a" style="left:598px;top:586px;width:1px;height:27px;background:#bcbcbc;"></div>
<div class="a" style="left:657px;top:586px;width:1px;height:27px;background:#bcbcbc;"></div>
<div class="a" style="left:718px;top:586px;width:1px;height:27px;background:#bcbcbc;"></div>
<div class="a" style="left:779px;top:586px;width:1px;height:27px;background:#bcbcbc;"></div>
<div class="a" style="left:816px;top:586px;width:1px;height:27px;background:#bcbcbc;"></div>
<div class="a" style="left:853px;top:586px;width:1px;height:27px;background:#bcbcbc;"></div>
<div class="t" style="left:0px;top:591.5px;width:67px;height:16px;line-height:16px;text-align:center;color:#fff;font-size:12px;"><span class="c">德乙</span></div>
<div class="t" style="left:70px;top:591.5px;width:71px;height:16px;line-height:16px;text-align:center;color:#222;font-size:12px;letter-spacing:0.25px;">25-11-08</div>
<div class="t" style="left:142px;top:591.5px;width:102px;height:16px;line-height:16px;text-align:center;color:#008000;font-size:12px;"><span class="c">汉诺威</span>96</div>
<div class="t" style="left:245px;top:591.5px;width:83px;height:16px;line-height:16px;text-align:center;color:#222;font-size:12px;letter-spacing:0.5px;"><span style="color:#ff0000">2-3</span>(2-1)</div>
<div class="t" style="left:329px;top:591.5px;width:37px;height:16px;line-height:16px;text-align:center;color:#222;font-size:12px;">5-5</div>
<div class="t" style="left:367px;top:591.5px;width:86px;height:16px;line-height:16px;text-align:center;color:#222;font-size:12px;"><span class="c">达姆施塔特</span></div>
<div class="t" style="left:454px;top:591.5px;width:38px;height:16px;line-height:16px;text-align:center;color:#222;font-size:12px;">0.90</div>
<div class="t" style="left:493px;top:591.5px;width:64px;height:16px;line-height:16px;text-align:center;color:#222;font-size:12px;"><span class="c">平</span>/<span class="c">半</span></div>
<div class="t" style="left:558px;top:591.5px;width:40px;height:16px;line-height:16px;text-align:center;color:#222;font-size:12px;">0.98</div>
<div class="t" style="left:599px;top:591.5px;width:58px;height:16px;line-height:16px;text-align:center;color:#222;font-size:12px;">2.01</div>
<div class="t" style="left:658px;top:591.5px;width:60px;height:16px;line-height:16px;text-align:center;color:#222;font-size:12px;">3.49</div>
<div class="t" style="left:719px;top:591.5px;width:60px;height:16px;line-height:16px;text-align:center;color:#222;font-size:12px;">3.52</div>
<div class="t" style="left:780px;top:591.5px;width:36px;height:16px;line-height:16px;text-align:center;color:#008000;font-size:12px;"><span class="c">负</span></div>
<div class="t" style="left:817px;top:591.5px;width:36px;height:16px;line-height:16px;text-align:center;color:#008000;font-size:12px;"><span class="c">输</span></div>
<div class="t" style="left:854px;top:591.5px;width:54px;height:16px;line-height:16px;text-align:center;color:#ff0000;font-size:12px;"><span class="c">大</span></div>
<div class="a" style="left:0px;top:614px;width:908px;height:27px;background:#efefef;"></div>
<div class="a" style="left:454px;top:614px;width:144px;height:27px;background:#fef9f6;"></div>
<div class="a" style="left:599px;top:614px;width:180px;height:27px;background:#f0f8fc;"></div>
<div class="a" style="left:0px;top:614px;width:69px;height:27px;background:#cc00cc;"></div>
<div class="a" style="left:69px;top:641px;width:839px;height:1px;background:#bcbcbc;"></div>
<div class="a" style="left:0px;top:641px;width:69px;height:1px;background:#bcbcbc;"></div>
<div class="a" style="left:141px;top:614px;width:1px;height:27px;background:#bcbcbc;"></div>
<div class="a" style="left:244px;top:614px;width:1px;height:27px;background:#bcbcbc;"></div>
<div class="a" style="left:328px;top:614px;width:1px;height:27px;background:#bcbcbc;"></div>
<div class="a" style="left:366px;top:614px;width:1px;height:27px;background:#bcbcbc;"></div>
<div class="a" style="left:453px;top:614px;width:1px;height:27px;background:#bcbcbc;"></div>
<div class="a" style="left:492px;top:614px;width:1px;height:27px;background:#bcbcbc;"></div>
<div class="a" style="left:557px;top:614px;width:1px;height:27px;background:#bcbcbc;"></div>
<div class="a" style="left:598px;top:614px;width:1px;height:27px;background:#bcbcbc;"></div>
<div class="a" style="left:657px;top:614px;width:1px;height:27px;background:#bcbcbc;"></div>
<div class="a" style="left:718px;top:614px;width:1px;height:27px;background:#bcbcbc;"></div>
<div class="a" style="left:779px;top:614px;width:1px;height:27px;background:#bcbcbc;"></div>
<div class="a" style="left:816px;top:614px;width:1px;height:27px;background:#bcbcbc;"></div>
<div class="a" style="left:853px;top:614px;width:1px;height:27px;background:#bcbcbc;"></div>
<div class="t" style="left:0px;top:619.5px;width:67px;height:16px;line-height:16px;text-align:center;color:#fff;font-size:12px;"><span class="c">德乙</span></div>
<div class="t" style="left:70px;top:619.5px;width:71px;height:16px;line-height:16px;text-align:center;color:#222;font-size:12px;letter-spacing:0.25px;">25-11-01</div>
<div class="t" style="left:142px;top:619.5px;width:102px;height:16px;line-height:16px;text-align:center;color:#222;font-size:12px;"><span class="c">埃弗斯堡</span></div>
<div class="t" style="left:245px;top:619.5px;width:83px;height:16px;line-height:16px;text-align:center;color:#222;font-size:12px;letter-spacing:0.5px;"><span style="color:#ff0000">2-2</span>(1-1)</div>
<div class="t" style="left:329px;top:619.5px;width:37px;height:16px;line-height:16px;text-align:center;color:#222;font-size:12px;">5-4</div>
<div class="t" style="left:367px;top:619.5px;width:86px;height:16px;line-height:16px;text-align:center;color:#008000;font-size:12px;"><span class="c">汉诺威</span>96</div>
<div class="t" style="left:454px;top:619.5px;width:38px;height:16px;line-height:16px;text-align:center;color:#222;font-size:12px;">1.02</div>
<div class="t" style="left:493px;top:619.5px;width:64px;height:16px;line-height:16px;text-align:center;color:#222;font-size:12px;"><span class="c">平</span>/<span class="c">半</span></div>
<div class="t" style="left:558px;top:619.5px;width:40px;height:16px;line-height:16px;text-align:center;color:#222;font-size:12px;">0.86</div>
<div class="t" style="left:599px;top:619.5px;width:58px;height:16px;line-height:16px;text-align:center;color:#222;font-size:12px;">2.29</div>
<div class="t" style="left:658px;top:619.5px;width:60px;height:16px;line-height:16px;text-align:center;color:#222;font-size:12px;">3.66</div>
<div class="t" style="left:719px;top:619.5px;width:60px;height:16px;line-height:16px;text-align:center;color:#222;font-size:12px;">2.75</div>
<div class="t" style="left:780px;top:619.5px;width:36px;height:16px;line-height:16px;text-align:center;color:#0000ff;font-size:12px;"><span class="c">平</span></div>
<div class="t" style="left:817px;top:619.5px;width:36px;height:16px;line-height:16px;text-align:center;color:#ff0000;font-size:12px;"><span class="c">赢</span></div>
<div class="t" style="left:854px;top:619.5px;width:54px;height:16px;line-height:16px;text-align:center;color:#ff0000;font-size:12px;"><span class="c">大</span></div>
<div class="a" style="left:0px;top:642px;width:908px;height:27px;background:#ffffff;"></div>
<div class="a" style="left:454px;top:642px;width:144px;height:27px;background:#fef9f6;"></div>
<div class="a" style="left:599px;top:642px;width:180px;height:27px;background:#f0f8fc;"></div>
<div class="a" style="left:0px;top:642px;width:69px;height:27px;background:#cc00cc;"></div>
<div class="a" style="left:69px;top:669px;width:839px;height:1px;background:#bcbcbc;"></div>
<div class="a" style="left:0px;top:669px;width:69px;height:1px;background:#bcbcbc;"></div>
<div class="a" style="left:141px;top:642px;width:1px;height:27px;background:#bcbcbc;"></div>
<div class="a" style="left:244px;top:642px;width:1px;height:27px;background:#bcbcbc;"></div>
<div class="a" style="left:328px;top:642px;width:1px;height:27px;background:#bcbcbc;"></div>
<div class="a" style="left:366px;top:642px;width:1px;height:27px;background:#bcbcbc;"></div>
<div class="a" style="left:453px;top:642px;width:1px;height:27px;background:#bcbcbc;"></div>
<div class="a" style="left:492px;top:642px;width:1px;height:27px;background:#bcbcbc;"></div>
<div class="a" style="left:557px;top:642px;width:1px;height:27px;background:#bcbcbc;"></div>
<div class="a" style="left:598px;top:642px;width:1px;height:27px;background:#bcbcbc;"></div>
<div class="a" style="left:657px;top:642px;width:1px;height:27px;background:#bcbcbc;"></div>
<div class="a" style="left:718px;top:642px;width:1px;height:27px;background:#bcbcbc;"></div>
<div class="a" style="left:779px;top:642px;width:1px;height:27px;background:#bcbcbc;"></div>
<div class="a" style="left:816px;top:642px;width:1px;height:27px;background:#bcbcbc;"></div>
<div class="a" style="left:853px;top:642px;width:1px;height:27px;background:#bcbcbc;"></div>
<div class="t" style="left:0px;top:647.5px;width:67px;height:16px;line-height:16px;text-align:center;color:#fff;font-size:12px;"><span class="c">德乙</span></div>
<div class="t" style="left:70px;top:647.5px;width:71px;height:16px;line-height:16px;text-align:center;color:#222;font-size:12px;letter-spacing:0.25px;">25-10-26</div>
<div class="t" style="left:142px;top:647.5px;width:102px;height:16px;line-height:16px;text-align:center;color:#222;font-size:12px;"><span class="rc">1</span><span class="c">布伦瑞克</span></div>
<div class="t" style="left:245px;top:647.5px;width:83px;height:16px;line-height:16px;text-align:center;color:#222;font-size:12px;letter-spacing:0.5px;"><span style="color:#ff0000">0-3</span>(0-2)</div>
<div class="t" style="left:329px;top:647.5px;width:37px;height:16px;line-height:16px;text-align:center;color:#222;font-size:12px;">2-5</div>
<div class="t" style="left:367px;top:647.5px;width:86px;height:16px;line-height:16px;text-align:center;color:#008000;font-size:12px;"><span class="c">汉诺威</span>96</div>
<div class="t" style="left:454px;top:647.5px;width:38px;height:16px;line-height:16px;text-align:center;color:#222;font-size:12px;">0.84</div>
<div class="t" style="left:493px;top:647.5px;width:64px;height:16px;line-height:16px;text-align:center;color:#222;font-size:12px;"><span style="color:#ff0000">*</span><span class="c">半球</span></div>
<div class="t" style="left:558px;top:647.5px;width:40px;height:16px;line-height:16px;text-align:center;color:#222;font-size:12px;">1.04</div>
<div class="t" style="left:599px;top:647.5px;width:58px;height:16px;line-height:16px;text-align:center;color:#222;font-size:12px;">3.73</div>
<div class="t" style="left:658px;top:647.5px;width:60px;height:16px;line-height:16px;text-align:center;color:#222;font-size:12px;">3.50</div>
<div class="t" style="left:719px;top:647.5px;width:60px;height:16px;line-height:16px;text-align:center;color:#222;font-size:12px;">1.93</div>
<div class="t" style="left:780px;top:647.5px;width:36px;height:16px;line-height:16px;text-align:center;color:#ff0000;font-size:12px;"><span class="c">胜</span></div>
<div class="t" style="left:817px;top:647.5px;width:36px;height:16px;line-height:16px;text-align:center;color:#ff0000;font-size:12px;"><span class="c">赢</span></div>
<div class="t" style="left:854px;top:647.5px;width:54px;height:16px;line-height:16px;text-align:center;color:#ff0000;font-size:12px;"><span class="c">大</span></div>
<div class="a" style="left:0px;top:670px;width:908px;height:27px;background:#efefef;"></div>
<div class="a" style="left:454px;top:670px;width:144px;height:27px;background:#fef9f6;"></div>
<div class="a" style="left:599px;top:670px;width:180px;height:27px;background:#f0f8fc;"></div>
<div class="a" style="left:0px;top:670px;width:69px;height:27px;background:#cc00cc;"></div>
<div class="a" style="left:69px;top:697px;width:839px;height:1px;background:#bcbcbc;"></div>
<div class="a" style="left:0px;top:697px;width:69px;height:1px;background:#bcbcbc;"></div>
<div class="a" style="left:141px;top:670px;width:1px;height:27px;background:#bcbcbc;"></div>
<div class="a" style="left:244px;top:670px;width:1px;height:27px;background:#bcbcbc;"></div>
<div class="a" style="left:328px;top:670px;width:1px;height:27px;background:#bcbcbc;"></div>
<div class="a" style="left:366px;top:670px;width:1px;height:27px;background:#bcbcbc;"></div>
<div class="a" style="left:453px;top:670px;width:1px;height:27px;background:#bcbcbc;"></div>
<div class="a" style="left:492px;top:670px;width:1px;height:27px;background:#bcbcbc;"></div>
<div class="a" style="left:557px;top:670px;width:1px;height:27px;background:#bcbcbc;"></div>
<div class="a" style="left:598px;top:670px;width:1px;height:27px;background:#bcbcbc;"></div>
<div class="a" style="left:657px;top:670px;width:1px;height:27px;background:#bcbcbc;"></div>
<div class="a" style="left:718px;top:670px;width:1px;height:27px;background:#bcbcbc;"></div>
<div class="a" style="left:779px;top:670px;width:1px;height:27px;background:#bcbcbc;"></div>
<div class="a" style="left:816px;top:670px;width:1px;height:27px;background:#bcbcbc;"></div>
<div class="a" style="left:853px;top:670px;width:1px;height:27px;background:#bcbcbc;"></div>
<div class="t" style="left:0px;top:675.5px;width:67px;height:16px;line-height:16px;text-align:center;color:#fff;font-size:12px;"><span class="c">德乙</span></div>
<div class="t" style="left:70px;top:675.5px;width:71px;height:16px;line-height:16px;text-align:center;color:#222;font-size:12px;letter-spacing:0.25px;">25-10-18</div>
<div class="t" style="left:142px;top:675.5px;width:102px;height:16px;line-height:16px;text-align:center;color:#008000;font-size:12px;"><span class="c">汉诺威</span>96</div>
<div class="t" style="left:245px;top:675.5px;width:83px;height:16px;line-height:16px;text-align:center;color:#222;font-size:12px;letter-spacing:0.5px;"><span style="color:#ff0000">0-3</span>(0-2)</div>
<div class="t" style="left:329px;top:675.5px;width:37px;height:16px;line-height:16px;text-align:center;color:#222;font-size:12px;">9-7</div>
<div class="t" style="left:367px;top:675.5px;width:86px;height:16px;line-height:16px;text-align:center;color:#222;font-size:12px;"><span class="c">沙尔克</span>04</div>
<div class="t" style="left:454px;top:675.5px;width:38px;height:16px;line-height:16px;text-align:center;color:#222;font-size:12px;">1.02</div>
<div class="t" style="left:493px;top:675.5px;width:64px;height:16px;line-height:16px;text-align:center;color:#222;font-size:12px;"><span class="c">半球</span></div>
<div class="t" style="left:558px;top:675.5px;width:40px;height:16px;line-height:16px;text-align:center;color:#222;font-size:12px;">0.86</div>
<div class="t" style="left:599px;top:675.5px;width:58px;height:16px;line-height:16px;text-align:center;color:#222;font-size:12px;">1.94</div>
<div class="t" style="left:658px;top:675.5px;width:60px;height:16px;line-height:16px;text-align:center;color:#222;font-size:12px;">3.54</div>
<div class="t" style="left:719px;top:675.5px;width:60px;height:16px;line-height:16px;text-align:center;color:#222;font-size:12px;">3.68</div>
<div class="t" style="left:780px;top:675.5px;width:36px;height:16px;line-height:16px;text-align:center;color:#008000;font-size:12px;"><span class="c">负</span></div>
<div class="t" style="left:817px;top:675.5px;width:36px;height:16px;line-height:16px;text-align:center;color:#008000;font-size:12px;"><span class="c">输</span></div>
<div class="t" style="left:854px;top:675.5px;width:54px;height:16px;line-height:16px;text-align:center;color:#ff0000;font-size:12px;"><span class="c">大</span></div>
<div class="a" style="left:0px;top:698px;width:908px;height:27px;background:#ffffff;"></div>
<div class="a" style="left:454px;top:698px;width:144px;height:27px;background:#fef9f6;"></div>
<div class="a" style="left:599px;top:698px;width:180px;height:27px;background:#f0f8fc;"></div>
<div class="a" style="left:0px;top:698px;width:69px;height:27px;background:#00a8a8;"></div>
<div class="a" style="left:69px;top:725px;width:839px;height:1px;background:#bcbcbc;"></div>
<div class="a" style="left:0px;top:725px;width:69px;height:1px;background:#bcbcbc;"></div>
<div class="a" style="left:141px;top:698px;width:1px;height:27px;background:#bcbcbc;"></div>
<div class="a" style="left:244px;top:698px;width:1px;height:27px;background:#bcbcbc;"></div>
<div class="a" style="left:328px;top:698px;width:1px;height:27px;background:#bcbcbc;"></div>
<div class="a" style="left:366px;top:698px;width:1px;height:27px;background:#bcbcbc;"></div>
<div class="a" style="left:453px;top:698px;width:1px;height:27px;background:#bcbcbc;"></div>
<div class="a" style="left:492px;top:698px;width:1px;height:27px;background:#bcbcbc;"></div>
<div class="a" style="left:557px;top:698px;width:1px;height:27px;background:#bcbcbc;"></div>
<div class="a" style="left:598px;top:698px;width:1px;height:27px;background:#bcbcbc;"></div>
<div class="a" style="left:657px;top:698px;width:1px;height:27px;background:#bcbcbc;"></div>
<div class="a" style="left:718px;top:698px;width:1px;height:27px;background:#bcbcbc;"></div>
<div class="a" style="left:779px;top:698px;width:1px;height:27px;background:#bcbcbc;"></div>
<div class="a" style="left:816px;top:698px;width:1px;height:27px;background:#bcbcbc;"></div>
<div class="a" style="left:853px;top:698px;width:1px;height:27px;background:#bcbcbc;"></div>
<div class="t" style="left:0px;top:703.5px;width:67px;height:16px;line-height:16px;text-align:center;color:#fff;font-size:12px;"><span class="c">球会友谊</span></div>
<div class="t" style="left:70px;top:703.5px;width:71px;height:16px;line-height:16px;text-align:center;color:#222;font-size:12px;letter-spacing:0.25px;">25-10-08</div>
<div class="t" style="left:142px;top:703.5px;width:102px;height:16px;line-height:16px;text-align:center;color:#008000;font-size:12px;"><span class="c">汉诺威</span>96</div>
<div class="t" style="left:245px;top:703.5px;width:83px;height:16px;line-height:16px;text-align:center;color:#222;font-size:12px;letter-spacing:0.5px;"><span style="color:#ff0000">2-1</span>(2-1)</div>
<div class="t" style="left:329px;top:703.5px;width:37px;height:16px;line-height:16px;text-align:center;color:#222;font-size:12px;">0-0</div>
<div class="t" style="left:367px;top:703.5px;width:86px;height:16px;line-height:16px;text-align:center;color:#222;font-size:12px;"><span class="c">哈雷斯彻</span></div>
<div class="t" style="left:454px;top:703.5px;width:38px;height:16px;line-height:16px;text-align:center;color:#222;font-size:12px;">1.07</div>
<div class="t" style="left:493px;top:703.5px;width:64px;height:16px;line-height:16px;text-align:center;color:#222;font-size:12px;"><span class="c">两球</span></div>
<div class="t" style="left:558px;top:703.5px;width:40px;height:16px;line-height:16px;text-align:center;color:#222;font-size:12px;">0.75</div>
<div class="t" style="left:599px;top:703.5px;width:58px;height:16px;line-height:16px;text-align:center;color:#222;font-size:12px;">1.22</div>
<div class="t" style="left:658px;top:703.5px;width:60px;height:16px;line-height:16px;text-align:center;color:#222;font-size:12px;">6.34</div>
<div class="t" style="left:719px;top:703.5px;width:60px;height:16px;line-height:16px;text-align:center;color:#222;font-size:12px;">8.65</div>
<div class="t" style="left:780px;top:703.5px;width:36px;height:16px;line-height:16px;text-align:center;color:#ff0000;font-size:12px;"><span class="c">胜</span></div>
<div class="t" style="left:817px;top:703.5px;width:36px;height:16px;line-height:16px;text-align:center;color:#008000;font-size:12px;"><span class="c">输</span></div>
<div class="t" style="left:854px;top:703.5px;width:54px;height:16px;line-height:16px;text-align:center;color:#008000;font-size:12px;"><span class="c">小</span></div>
<div class="a" style="left:0px;top:726px;width:908px;height:27px;background:#efefef;"></div>
<div class="a" style="left:454px;top:726px;width:144px;height:27px;background:#fef9f6;"></div>
<div class="a" style="left:599px;top:726px;width:180px;height:27px;background:#f0f8fc;"></div>
<div class="a" style="left:0px;top:726px;width:69px;height:27px;background:#cc00cc;"></div>
<div class="a" style="left:69px;top:753px;width:839px;height:1px;background:#bcbcbc;"></div>
<div class="a" style="left:0px;top:753px;width:69px;height:1px;background:#eef3ee;"></div>
<div class="a" style="left:141px;top:726px;width:1px;height:27px;background:#bcbcbc;"></div>
<div class="a" style="left:244px;top:726px;width:1px;height:27px;background:#bcbcbc;"></div>
<div class="a" style="left:328px;top:726px;width:1px;height:27px;background:#bcbcbc;"></div>
<div class="a" style="left:366px;top:726px;width:1px;height:27px;background:#bcbcbc;"></div>
<div class="a" style="left:453px;top:726px;width:1px;height:27px;background:#bcbcbc;"></div>
<div class="a" style="left:492px;top:726px;width:1px;height:27px;background:#bcbcbc;"></div>
<div class="a" style="left:557px;top:726px;width:1px;height:27px;background:#bcbcbc;"></div>
<div class="a" style="left:598px;top:726px;width:1px;height:27px;background:#bcbcbc;"></div>
<div class="a" style="left:657px;top:726px;width:1px;height:27px;background:#bcbcbc;"></div>
<div class="a" style="left:718px;top:726px;width:1px;height:27px;background:#bcbcbc;"></div>
<div class="a" style="left:779px;top:726px;width:1px;height:27px;background:#bcbcbc;"></div>
<div class="a" style="left:816px;top:726px;width:1px;height:27px;background:#bcbcbc;"></div>
<div class="a" style="left:853px;top:726px;width:1px;height:27px;background:#bcbcbc;"></div>
<div class="t" style="left:0px;top:731.5px;width:67px;height:16px;line-height:16px;text-align:center;color:#fff;font-size:12px;"><span class="c">德乙</span></div>
<div class="t" style="left:70px;top:731.5px;width:71px;height:16px;line-height:16px;text-align:center;color:#222;font-size:12px;letter-spacing:0.25px;">25-10-05</div>
<div class="t" style="left:142px;top:731.5px;width:102px;height:16px;line-height:16px;text-align:center;color:#222;font-size:12px;"><span class="c">菲尔特</span></div>
<div class="t" style="left:245px;top:731.5px;width:83px;height:16px;line-height:16px;text-align:center;color:#222;font-size:12px;letter-spacing:0.5px;"><span style="color:#ff0000">2-2</span>(1-1)</div>
<div class="t" style="left:329px;top:731.5px;width:37px;height:16px;line-height:16px;text-align:center;color:#222;font-size:12px;">3-6</div>
<div class="t" style="left:367px;top:731.5px;width:86px;height:16px;line-height:16px;text-align:center;color:#008000;font-size:12px;"><span class="c">汉诺威</span>96</div>
<div class="t" style="left:454px;top:731.5px;width:38px;height:16px;line-height:16px;text-align:center;color:#222;font-size:12px;">0.93</div>
<div class="t" style="left:493px;top:731.5px;width:64px;height:16px;line-height:16px;text-align:center;color:#222;font-size:12px;"><span style="color:#ff0000">*</span><span class="c">半</span>/<span class="c">一</span></div>
<div class="t" style="left:558px;top:731.5px;width:40px;height:16px;line-height:16px;text-align:center;color:#222;font-size:12px;">0.95</div>
<div class="t" style="left:599px;top:731.5px;width:58px;height:16px;line-height:16px;text-align:center;color:#222;font-size:12px;">3.95</div>
<div class="t" style="left:658px;top:731.5px;width:60px;height:16px;line-height:16px;text-align:center;color:#222;font-size:12px;">3.90</div>
<div class="t" style="left:719px;top:731.5px;width:60px;height:16px;line-height:16px;text-align:center;color:#222;font-size:12px;">1.79</div>
<div class="t" style="left:780px;top:731.5px;width:36px;height:16px;line-height:16px;text-align:center;color:#0000ff;font-size:12px;"><span class="c">平</span></div>
<div class="t" style="left:817px;top:731.5px;width:36px;height:16px;line-height:16px;text-align:center;color:#008000;font-size:12px;"><span class="c">输</span></div>
<div class="t" style="left:854px;top:731.5px;width:54px;height:16px;line-height:16px;text-align:center;color:#ff0000;font-size:12px;"><span class="c">大</span></div>
</body></html>
